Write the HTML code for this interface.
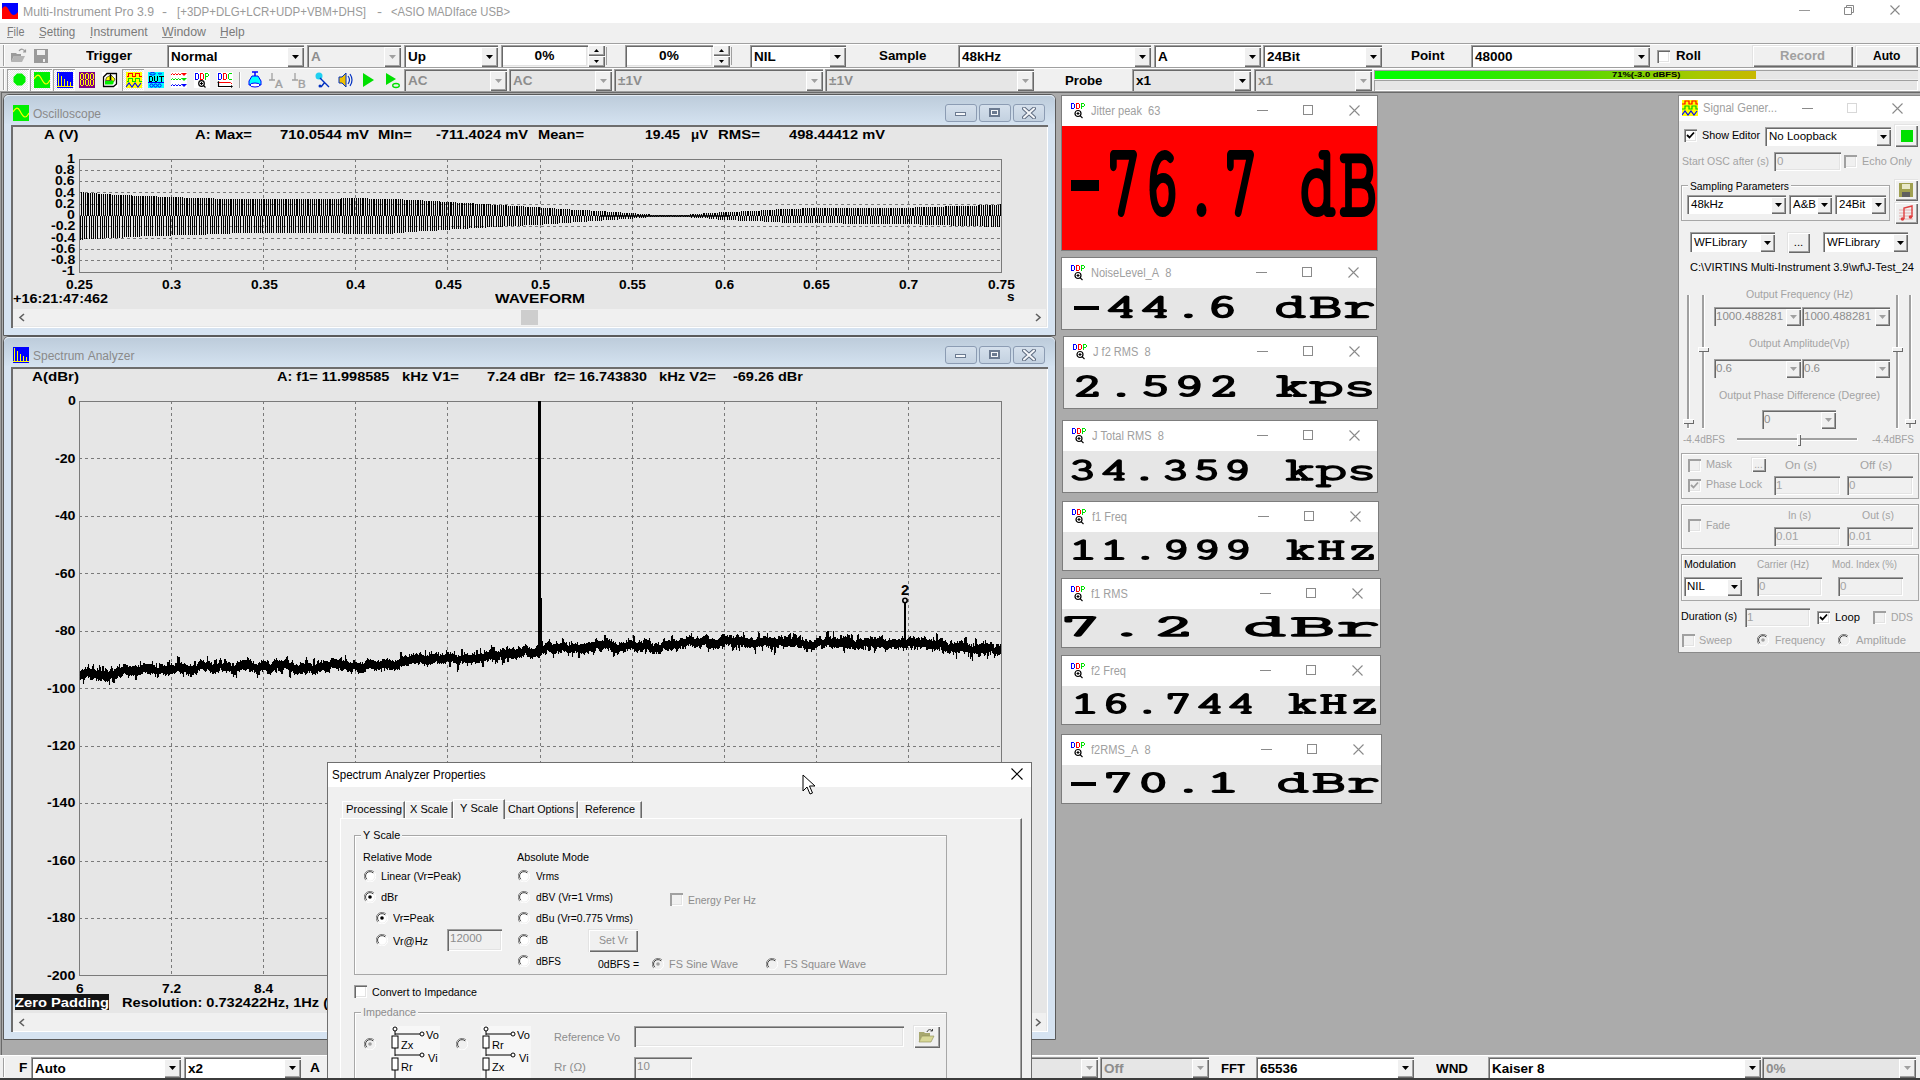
<!DOCTYPE html><html><head><meta charset="utf-8"><style>
html,body{margin:0;padding:0;width:1920px;height:1080px;overflow:hidden;background:#ababab;}
body{position:relative;font-family:"Liberation Sans", sans-serif;}
div,svg{position:absolute;box-sizing:border-box;}
.t{white-space:nowrap;}
</style></head><body>
<div style="left:0px;top:0px;width:1920px;height:23px;background:#fff;"></div>
<svg style="left:2px;top:3px" width="16" height="16"><rect width="16" height="16" fill="#00f"/><path d="M0 16 L0 6 C3 1 5 3 8 9 C10 13 13 13 16 9 L16 16 Z" fill="#f00"/></svg>
<div class="t" style="left:23.00px;top:6.34px;font-size:12px;line-height:12px;font-weight:400;color:#9a9a9a;font-family:'Liberation Sans', sans-serif;transform:scaleX(1.0231);transform-origin:0 0;">Multi-Instrument&nbsp;Pro&nbsp;3.9</div>
<div class="t" style="left:162.00px;top:6.34px;font-size:12px;line-height:12px;font-weight:400;color:#9a9a9a;font-family:'Liberation Sans', sans-serif;transform:scaleX(1.2510);transform-origin:0 0;">-</div>
<div class="t" style="left:177.00px;top:6.34px;font-size:12px;line-height:12px;font-weight:400;color:#9a9a9a;font-family:'Liberation Sans', sans-serif;transform:scaleX(0.9574);transform-origin:0 0;">[+3DP+DLG+LCR+UDP+VBM+DHS]</div>
<div class="t" style="left:377.00px;top:6.34px;font-size:12px;line-height:12px;font-weight:400;color:#9a9a9a;font-family:'Liberation Sans', sans-serif;transform:scaleX(1.2510);transform-origin:0 0;">-</div>
<div class="t" style="left:391.00px;top:6.34px;font-size:12px;line-height:12px;font-weight:400;color:#9a9a9a;font-family:'Liberation Sans', sans-serif;transform:scaleX(0.9391);transform-origin:0 0;">&lt;ASIO&nbsp;MADIface&nbsp;USB&gt;</div>
<div style="left:1799px;top:10px;width:11px;height:1px;background:#999;"></div>
<svg style="left:1844px;top:5px" width="11" height="11"><path d="M2.5 2.5 V0.5 H9.5 V7.5 H7.5 M0.5 2.5 H7.5 V9.5 H0.5 Z" fill="none" stroke="#888" stroke-width="1"/></svg>
<svg style="left:1890px;top:5px" width="10" height="10"><path d="M0.5 0.5 L9.5 9.5 M9.5 0.5 L0.5 9.5" stroke="#888" stroke-width="1.1"/></svg>
<div style="left:0px;top:23px;width:1920px;height:20px;background:#f0f0f0;"></div>
<div class="t" style="left:7.00px;top:25.84px;font-size:12px;line-height:12px;font-weight:400;color:#7a7a7a;font-family:'Liberation Sans', sans-serif;transform:scaleX(0.9000);transform-origin:0 0;">File</div>
<div style="left:7px;top:37px;width:6px;height:1px;background:#8a8a8a;"></div>
<div class="t" style="left:39.00px;top:25.84px;font-size:12px;line-height:12px;font-weight:400;color:#7a7a7a;font-family:'Liberation Sans', sans-serif;transform:scaleX(0.9690);transform-origin:0 0;">Setting</div>
<div style="left:39px;top:37px;width:6px;height:1px;background:#8a8a8a;"></div>
<div class="t" style="left:90.00px;top:25.84px;font-size:12px;line-height:12px;font-weight:400;color:#7a7a7a;font-family:'Liberation Sans', sans-serif;transform:scaleX(1.0178);transform-origin:0 0;">Instrument</div>
<div style="left:90px;top:37px;width:2px;height:1px;background:#8a8a8a;"></div>
<div class="t" style="left:162.00px;top:25.84px;font-size:12px;line-height:12px;font-weight:400;color:#7a7a7a;font-family:'Liberation Sans', sans-serif;transform:scaleX(1.0310);transform-origin:0 0;">Window</div>
<div style="left:162px;top:37px;width:11px;height:1px;background:#8a8a8a;"></div>
<div class="t" style="left:220.00px;top:25.84px;font-size:12px;line-height:12px;font-weight:400;color:#7a7a7a;font-family:'Liberation Sans', sans-serif;transform:scaleX(0.9968);transform-origin:0 0;">Help</div>
<div style="left:220px;top:37px;width:7px;height:1px;background:#8a8a8a;"></div>
<div style="left:0px;top:43px;width:1920px;height:1px;background:#a0a0a0;"></div>
<div style="left:0px;top:44px;width:1920px;height:48px;background:#f0f0f0;"></div>
<div style="left:0px;top:67px;width:1920px;height:1px;background:#a0a0a0;"></div>
<div style="left:0px;top:91px;width:1920px;height:1px;background:#a0a0a0;"></div>
<div style="left:0px;top:92px;width:1920px;height:963px;background:#ababab;"></div>
<div style="left:0px;top:92px;width:1920px;height:1px;background:#696969;"></div>
<div style="left:0px;top:92px;width:1px;height:963px;background:#a0a0a0;"></div>
<div style="left:1px;top:92px;width:1px;height:963px;background:#696969;"></div>
<div style="left:0px;top:1055px;width:1920px;height:25px;background:#f0f0f0;"></div>
<div style="left:0px;top:1078px;width:1920px;height:2px;background:#3c3c3c;"></div>
<div style="left:3px;top:94px;width:1053px;height:242px;background:#d6e3f1;border:1px solid #5a5a5a;border-radius:6px 6px 0 0;"></div>
<div style="left:4px;top:95px;width:1051px;height:29px;background:linear-gradient(#bccbda,#d4e2f0);border-radius:5px 5px 0 0;box-shadow:inset 0 1px 0 #e6edf5;"></div>
<svg style="left:13px;top:105px" width="16" height="16"><rect width="16" height="16" fill="#00f000"/><path d="M0 7 C3 2 5 2 7 6 S10 12 12 12 S15 10 16 8" fill="none" stroke="#ff0" stroke-width="1.2"/></svg>
<div class="t" style="left:33.00px;top:107.84px;font-size:12px;line-height:12px;font-weight:400;color:#8a8a8a;font-family:'Liberation Sans', sans-serif;">Oscilloscope</div>
<div style="left:945px;top:104px;width:32px;height:18px;border:1px solid #8c9cb3;border-radius:3px;background:linear-gradient(#d5e0ec,#c3d1e0);"></div>
<div style="left:979px;top:104px;width:32px;height:18px;border:1px solid #8c9cb3;border-radius:3px;background:linear-gradient(#d5e0ec,#c3d1e0);"></div>
<div style="left:1013px;top:104px;width:32px;height:18px;border:1px solid #8c9cb3;border-radius:3px;background:linear-gradient(#d5e0ec,#c3d1e0);"></div>
<div style="left:955px;top:112px;width:11px;height:4px;border:1px solid #6b7a90;background:#f4f6f9;"></div>
<div style="left:989px;top:108px;width:11px;height:9px;border:2px solid #6b7a90;background:#f4f6f9;"></div>
<div style="left:992px;top:111px;width:5px;height:3px;background:#6b7a90;"></div>
<svg style="left:1022px;top:107px" width="14" height="12"><path d="M2 1.5 L12 10.5 M12 1.5 L2 10.5" stroke="#5e6b80" stroke-width="4" stroke-linecap="round"/><path d="M2 1.5 L12 10.5 M12 1.5 L2 10.5" stroke="#f4f6f9" stroke-width="2" stroke-linecap="round"/></svg>
<div style="left:11px;top:125px;width:1037px;height:203px;background:#e6e6e6;box-shadow:inset 2px 2px 0 #6d6d6d, inset -1px -1px 0 #fff;"></div>
<div style="left:3px;top:336px;width:1053px;height:704px;background:#d6e3f1;border:1px solid #5a5a5a;border-radius:6px 6px 0 0;"></div>
<div style="left:4px;top:337px;width:1051px;height:29px;background:linear-gradient(#bccbda,#d4e2f0);border-radius:5px 5px 0 0;box-shadow:inset 0 1px 0 #e6edf5;"></div>
<svg style="left:13px;top:347px" width="16" height="16"><rect width="16" height="16" fill="#0000ff"/><path d="M1.5 1V15 M4.5 4V15 M7.5 7V15 M10.5 9V15 M13.5 10V15 M0 14.5H16" stroke="#ff0" stroke-width="1"/></svg>
<div class="t" style="left:33.00px;top:349.84px;font-size:12px;line-height:12px;font-weight:400;color:#8a8a8a;font-family:'Liberation Sans', sans-serif;">Spectrum&nbsp;Analyzer</div>
<div style="left:945px;top:346px;width:32px;height:18px;border:1px solid #8c9cb3;border-radius:3px;background:linear-gradient(#d5e0ec,#c3d1e0);"></div>
<div style="left:979px;top:346px;width:32px;height:18px;border:1px solid #8c9cb3;border-radius:3px;background:linear-gradient(#d5e0ec,#c3d1e0);"></div>
<div style="left:1013px;top:346px;width:32px;height:18px;border:1px solid #8c9cb3;border-radius:3px;background:linear-gradient(#d5e0ec,#c3d1e0);"></div>
<div style="left:955px;top:354px;width:11px;height:4px;border:1px solid #6b7a90;background:#f4f6f9;"></div>
<div style="left:989px;top:350px;width:11px;height:9px;border:2px solid #6b7a90;background:#f4f6f9;"></div>
<div style="left:992px;top:353px;width:5px;height:3px;background:#6b7a90;"></div>
<svg style="left:1022px;top:349px" width="14" height="12"><path d="M2 1.5 L12 10.5 M12 1.5 L2 10.5" stroke="#5e6b80" stroke-width="4" stroke-linecap="round"/><path d="M2 1.5 L12 10.5 M12 1.5 L2 10.5" stroke="#f4f6f9" stroke-width="2" stroke-linecap="round"/></svg>
<div style="left:11px;top:367px;width:1037px;height:665px;background:#e6e6e6;box-shadow:inset 2px 2px 0 #6d6d6d, inset -1px -1px 0 #fff;"></div>
<svg style="left:0;top:0" width="1920" height="1080"><path d="M171.5 159 V272" stroke="#7a7a7a" stroke-width="1" stroke-dasharray="3 3"/><path d="M263.5 159 V272" stroke="#7a7a7a" stroke-width="1" stroke-dasharray="3 3"/><path d="M355.5 159 V272" stroke="#7a7a7a" stroke-width="1" stroke-dasharray="3 3"/><path d="M447.5 159 V272" stroke="#7a7a7a" stroke-width="1" stroke-dasharray="3 3"/><path d="M540.5 159 V272" stroke="#7a7a7a" stroke-width="1" stroke-dasharray="3 3"/><path d="M632.5 159 V272" stroke="#7a7a7a" stroke-width="1" stroke-dasharray="3 3"/><path d="M724.5 159 V272" stroke="#7a7a7a" stroke-width="1" stroke-dasharray="3 3"/><path d="M816.5 159 V272" stroke="#7a7a7a" stroke-width="1" stroke-dasharray="3 3"/><path d="M908.5 159 V272" stroke="#7a7a7a" stroke-width="1" stroke-dasharray="3 3"/><path d="M79 170.5 H1001" stroke="#7a7a7a" stroke-width="1" stroke-dasharray="3 3"/><path d="M79 181.5 H1001" stroke="#7a7a7a" stroke-width="1" stroke-dasharray="3 3"/><path d="M79 192.5 H1001" stroke="#7a7a7a" stroke-width="1" stroke-dasharray="3 3"/><path d="M79 204.5 H1001" stroke="#7a7a7a" stroke-width="1" stroke-dasharray="3 3"/><path d="M79 215.5 H1001" stroke="#7a7a7a" stroke-width="1" stroke-dasharray="3 3"/><path d="M79 226.5 H1001" stroke="#7a7a7a" stroke-width="1" stroke-dasharray="3 3"/><path d="M79 238.5 H1001" stroke="#7a7a7a" stroke-width="1" stroke-dasharray="3 3"/><path d="M79 249.5 H1001" stroke="#7a7a7a" stroke-width="1" stroke-dasharray="3 3"/><path d="M79 260.5 H1001" stroke="#7a7a7a" stroke-width="1" stroke-dasharray="3 3"/><rect x="79.5" y="159.5" width="922" height="113" fill="none" stroke="#7a7a7a" stroke-width="1"/><path d="M80.5 216V240M81.5 192V216M82.5 216V240M83.5 192V216M84.5 216V239M85.5 193V216M86.5 216V239M87.5 193V216M88.5 193V216M89.5 216V239M90.5 193V216M91.5 216V239M92.5 193V216M93.5 216V239M94.5 193V216M95.5 216V239M96.5 193V216M97.5 216V239M98.5 194V216M99.5 194V216M100.5 216V239M101.5 194V216M102.5 216V239M103.5 194V216M104.5 216V238M105.5 194V216M106.5 216V238M107.5 194V216M108.5 216V238M109.5 194V216M110.5 194V216M111.5 216V238M112.5 195V216M113.5 216V238M114.5 195V216M115.5 216V238M116.5 195V216M117.5 216V238M118.5 195V216M119.5 216V238M120.5 195V216M121.5 195V216M122.5 216V238M123.5 195V216M124.5 216V237M125.5 195V216M126.5 216V237M127.5 195V216M128.5 216V237M129.5 195V216M130.5 216V237M131.5 195V216M132.5 196V216M133.5 216V237M134.5 196V216M135.5 216V237M136.5 196V216M137.5 216V237M138.5 196V216M139.5 216V237M140.5 196V216M141.5 216V236M142.5 196V216M143.5 196V216M144.5 216V236M145.5 196V216M146.5 216V236M147.5 196V216M148.5 216V236M149.5 196V216M150.5 216V236M151.5 196V216M152.5 216V236M153.5 196V216M154.5 196V216M155.5 216V236M156.5 196V216M157.5 216V236M158.5 197V216M159.5 216V236M160.5 197V216M161.5 216V236M162.5 197V216M163.5 216V236M164.5 197V216M165.5 197V216M166.5 216V236M167.5 197V216M168.5 216V236M169.5 197V216M170.5 216V236M171.5 197V216M172.5 216V235M173.5 197V216M174.5 216V235M175.5 197V216M176.5 197V216M177.5 216V235M178.5 197V216M179.5 216V235M180.5 197V216M181.5 216V235M182.5 197V216M183.5 216V235M184.5 198V216M185.5 216V235M186.5 198V216M187.5 198V216M188.5 216V235M189.5 198V216M190.5 216V235M191.5 198V216M192.5 216V235M193.5 198V216M194.5 216V235M195.5 198V216M196.5 216V235M197.5 198V216M198.5 198V216M199.5 216V235M200.5 198V216M201.5 216V235M202.5 198V216M203.5 216V235M204.5 198V216M205.5 216V235M206.5 198V216M207.5 216V234M208.5 198V216M209.5 198V216M210.5 216V234M211.5 198V216M212.5 216V234M213.5 198V216M214.5 216V234M215.5 199V216M216.5 216V234M217.5 199V216M218.5 216V234M219.5 199V216M220.5 199V216M221.5 216V234M222.5 199V216M223.5 216V234M224.5 199V216M225.5 216V234M226.5 199V216M227.5 216V234M228.5 199V216M229.5 216V234M230.5 199V216M231.5 199V216M232.5 216V233M233.5 199V216M234.5 216V233M235.5 199V216M236.5 216V233M237.5 199V216M238.5 216V233M239.5 199V216M240.5 216V233M241.5 199V216M242.5 199V216M243.5 216V233M244.5 199V216M245.5 216V233M246.5 199V216M247.5 216V233M248.5 199V216M249.5 216V233M250.5 199V216M251.5 216V233M252.5 199V216M253.5 199V216M254.5 216V233M255.5 199V216M256.5 216V233M257.5 199V216M258.5 216V233M259.5 199V216M260.5 216V233M261.5 199V216M262.5 216V233M263.5 199V216M264.5 199V216M265.5 216V233M266.5 199V216M267.5 216V233M268.5 199V216M269.5 216V233M270.5 199V216M271.5 216V233M272.5 199V216M273.5 216V233M274.5 199V216M275.5 199V216M276.5 216V233M277.5 199V216M278.5 216V233M279.5 199V216M280.5 216V233M281.5 199V216M282.5 216V233M283.5 199V216M284.5 216V233M285.5 199V216M286.5 199V216M287.5 216V233M288.5 199V216M289.5 216V233M290.5 199V216M291.5 216V233M292.5 199V216M293.5 216V233M294.5 199V216M295.5 216V233M296.5 199V216M297.5 199V216M298.5 216V233M299.5 199V216M300.5 216V233M301.5 199V216M302.5 216V233M303.5 199V216M304.5 216V233M305.5 199V216M306.5 216V233M307.5 199V216M308.5 199V216M309.5 216V233M310.5 199V216M311.5 216V233M312.5 199V216M313.5 216V233M314.5 199V216M315.5 216V233M316.5 199V216M317.5 216V233M318.5 199V216M319.5 199V216M320.5 216V233M321.5 199V216M322.5 216V233M323.5 199V216M324.5 216V233M325.5 199V216M326.5 216V233M327.5 199V216M328.5 216V233M329.5 199V216M330.5 199V216M331.5 216V233M332.5 199V216M333.5 216V233M334.5 199V216M335.5 216V233M336.5 199V216M337.5 216V233M338.5 199V216M339.5 216V233M340.5 199V216M341.5 198V216M342.5 216V233M343.5 198V216M344.5 216V234M345.5 198V216M346.5 216V234M347.5 198V216M348.5 216V234M349.5 198V216M350.5 216V234M351.5 198V216M352.5 198V216M353.5 216V234M354.5 198V216M355.5 216V234M356.5 198V216M357.5 216V234M358.5 198V216M359.5 216V234M360.5 198V216M361.5 216V234M362.5 198V216M363.5 198V216M364.5 216V234M365.5 198V216M366.5 216V234M367.5 198V216M368.5 216V234M369.5 199V216M370.5 216V234M371.5 199V216M372.5 216V234M373.5 199V216M374.5 199V216M375.5 216V234M376.5 199V216M377.5 216V234M378.5 199V216M379.5 216V234M380.5 199V216M381.5 216V234M382.5 199V216M383.5 216V234M384.5 199V216M385.5 199V216M386.5 216V234M387.5 199V216M388.5 216V234M389.5 199V216M390.5 216V234M391.5 199V216M392.5 216V234M393.5 199V216M394.5 216V233M395.5 199V216M396.5 199V216M397.5 216V233M398.5 199V216M399.5 216V233M400.5 199V216M401.5 216V233M402.5 199V216M403.5 216V233M404.5 200V216M405.5 216V232M406.5 200V216M407.5 200V216M408.5 216V232M409.5 200V216M410.5 216V232M411.5 200V216M412.5 216V232M413.5 200V216M414.5 216V232M415.5 200V216M416.5 216V232M417.5 200V216M418.5 200V216M419.5 216V231M420.5 200V216M421.5 216V231M422.5 200V216M423.5 216V231M424.5 201V216M425.5 216V231M426.5 201V216M427.5 216V231M428.5 201V216M429.5 201V216M430.5 216V231M431.5 201V216M432.5 216V231M433.5 201V216M434.5 216V231M435.5 201V216M436.5 216V231M437.5 201V216M438.5 216V230M439.5 201V216M440.5 202V216M441.5 216V230M442.5 202V216M443.5 216V230M444.5 202V216M445.5 216V230M446.5 202V216M447.5 216V230M448.5 202V216M449.5 216V230M450.5 202V216M451.5 202V216M452.5 216V229M453.5 202V216M454.5 216V229M455.5 202V216M456.5 216V229M457.5 203V216M458.5 216V229M459.5 203V216M460.5 216V229M461.5 203V216M462.5 203V216M463.5 216V229M464.5 203V216M465.5 216V229M466.5 203V216M467.5 216V229M468.5 203V216M469.5 216V228M470.5 203V216M471.5 216V228M472.5 203V216M473.5 203V216M474.5 216V228M475.5 204V216M476.5 216V228M477.5 204V216M478.5 216V228M479.5 204V216M480.5 216V228M481.5 204V216M482.5 216V228M483.5 204V216M484.5 204V216M485.5 216V228M486.5 204V216M487.5 216V227M488.5 204V216M489.5 216V227M490.5 204V216M491.5 216V227M492.5 205V216M493.5 216V227M494.5 205V216M495.5 205V216M496.5 216V227M497.5 205V216M498.5 216V227M499.5 205V216M500.5 216V227M501.5 205V216M502.5 216V227M503.5 205V216M504.5 216V226M505.5 205V216M506.5 205V216M507.5 216V226M508.5 206V216M509.5 216V226M510.5 206V216M511.5 216V226M512.5 206V216M513.5 216V226M514.5 206V216M515.5 216V226M516.5 206V216M517.5 206V216M518.5 216V226M519.5 206V216M520.5 216V226M521.5 206V216M522.5 216V226M523.5 206V216M524.5 216V225M525.5 207V216M526.5 216V225M527.5 207V216M528.5 207V216M529.5 216V225M530.5 207V216M531.5 216V225M532.5 207V216M533.5 216V225M534.5 207V216M535.5 216V225M536.5 207V216M537.5 216V225M538.5 207V216M539.5 207V216M540.5 216V225M541.5 208V216M542.5 216V225M543.5 208V216M544.5 216V224M545.5 208V216M546.5 216V224M547.5 208V216M548.5 216V224M549.5 208V216M550.5 208V216M551.5 216V224M552.5 208V216M553.5 216V224M554.5 208V216M555.5 216V224M556.5 209V216M557.5 216V224M558.5 209V216M559.5 216V223M560.5 209V216M561.5 209V216M562.5 216V223M563.5 209V216M564.5 216V223M565.5 209V216M566.5 216V223M567.5 209V216M568.5 216V223M569.5 209V216M570.5 216V223M571.5 210V216M572.5 210V216M573.5 216V222M574.5 210V216M575.5 216V222M576.5 210V216M577.5 216V222M578.5 210V216M579.5 216V222M580.5 210V216M581.5 216V222M582.5 210V216M583.5 210V216M584.5 216V222M585.5 210V216M586.5 216V222M587.5 210V216M588.5 216V221M589.5 210V216M590.5 216V221M591.5 211V216M592.5 216V221M593.5 211V216M594.5 211V216M595.5 216V221M596.5 211V216M597.5 216V221M598.5 211V216M599.5 216V221M600.5 211V216M601.5 216V221M602.5 211V216M603.5 216V220M604.5 211V216M605.5 211V216M606.5 216V220M607.5 212V216M608.5 216V220M609.5 212V216M610.5 216V220M611.5 212V216M612.5 216V220M613.5 212V216M614.5 216V220M615.5 212V216M616.5 212V216M617.5 216V220M618.5 212V216M619.5 216V219M620.5 212V216M621.5 216V219M622.5 213V216M623.5 216V219M624.5 213V216M625.5 216V219M626.5 213V216M627.5 213V216M628.5 216V219M629.5 213V216M630.5 216V219M631.5 213V216M632.5 216V219M633.5 213V216M634.5 216V218M635.5 213V216M636.5 216V218M637.5 214V216M638.5 214V216M639.5 216V218M640.5 214V216M641.5 216V218M642.5 214V216M643.5 216V218M644.5 214V216M645.5 216V218M646.5 214V216M647.5 216V217M648.5 214V216M649.5 214V216M650.5 216V217M651.5 215V216M652.5 216V217M653.5 215V216M654.5 216V217M655.5 215V216M656.5 216V217M657.5 215V216M658.5 216V217M659.5 215V216M660.5 215V216M661.5 216V217M662.5 215V216M663.5 216V217M664.5 215V216M665.5 216V217M666.5 215V216M667.5 216V217M668.5 215V216M669.5 216V217M670.5 215V216M671.5 215V216M672.5 216V217M673.5 215V216M674.5 216V217M675.5 215V216M676.5 216V217M677.5 215V216M678.5 216V217M679.5 215V216M680.5 216V217M681.5 215V216M682.5 215V216M683.5 216V217M684.5 215V216M685.5 216V217M686.5 215V216M687.5 216V217M688.5 215V216M689.5 216V217M690.5 214V216M691.5 216V218M692.5 214V216M693.5 214V216M694.5 216V218M695.5 214V216M696.5 216V218M697.5 214V216M698.5 216V218M699.5 214V216M700.5 216V218M701.5 214V216M702.5 216V218M703.5 213V216M704.5 213V216M705.5 216V218M706.5 213V216M707.5 216V218M708.5 213V216M709.5 216V219M710.5 213V216M711.5 216V219M712.5 213V216M713.5 216V219M714.5 213V216M715.5 213V216M716.5 216V219M717.5 213V216M718.5 216V220M719.5 212V216M720.5 216V220M721.5 212V216M722.5 216V220M723.5 212V216M724.5 216V220M725.5 212V216M726.5 212V216M727.5 216V220M728.5 212V216M729.5 216V220M730.5 212V216M731.5 216V220M732.5 212V216M733.5 216V220M734.5 212V216M735.5 216V220M736.5 212V216M737.5 212V216M738.5 216V221M739.5 212V216M740.5 216V221M741.5 211V216M742.5 216V221M743.5 211V216M744.5 216V221M745.5 211V216M746.5 216V221M747.5 211V216M748.5 211V216M749.5 216V221M750.5 211V216M751.5 216V221M752.5 211V216M753.5 216V221M754.5 211V216M755.5 216V221M756.5 211V216M757.5 216V221M758.5 211V216M759.5 211V216M760.5 216V221M761.5 210V216M762.5 216V221M763.5 210V216M764.5 216V222M765.5 210V216M766.5 216V222M767.5 210V216M768.5 216V222M769.5 210V216M770.5 210V216M771.5 216V222M772.5 210V216M773.5 216V222M774.5 210V216M775.5 216V222M776.5 209V216M777.5 216V222M778.5 209V216M779.5 216V222M780.5 209V216M781.5 209V216M782.5 216V223M783.5 209V216M784.5 216V223M785.5 209V216M786.5 216V223M787.5 209V216M788.5 216V223M789.5 209V216M790.5 216V223M791.5 209V216M792.5 209V216M793.5 216V223M794.5 209V216M795.5 216V223M796.5 209V216M797.5 216V223M798.5 209V216M799.5 216V223M800.5 209V216M801.5 216V223M802.5 208V216M803.5 208V216M804.5 216V223M805.5 208V216M806.5 216V223M807.5 208V216M808.5 216V223M809.5 208V216M810.5 216V223M811.5 208V216M812.5 216V223M813.5 208V216M814.5 208V216M815.5 216V223M816.5 208V216M817.5 216V223M818.5 208V216M819.5 216V223M820.5 208V216M821.5 216V223M822.5 208V216M823.5 216V223M824.5 208V216M825.5 208V216M826.5 216V223M827.5 208V216M828.5 216V223M829.5 208V216M830.5 216V223M831.5 208V216M832.5 216V223M833.5 208V216M834.5 216V223M835.5 208V216M836.5 208V216M837.5 216V223M838.5 208V216M839.5 216V223M840.5 208V216M841.5 216V223M842.5 208V216M843.5 216V224M844.5 208V216M845.5 216V224M846.5 208V216M847.5 208V216M848.5 216V224M849.5 208V216M850.5 216V224M851.5 208V216M852.5 216V224M853.5 208V216M854.5 216V224M855.5 208V216M856.5 216V224M857.5 208V216M858.5 208V216M859.5 216V224M860.5 208V216M861.5 216V224M862.5 208V216M863.5 216V224M864.5 208V216M865.5 216V224M866.5 208V216M867.5 216V224M868.5 208V216M869.5 208V216M870.5 216V224M871.5 208V216M872.5 216V224M873.5 208V216M874.5 216V224M875.5 208V216M876.5 216V224M877.5 208V216M878.5 216V224M879.5 208V216M880.5 208V216M881.5 216V224M882.5 208V216M883.5 216V224M884.5 208V216M885.5 216V224M886.5 208V216M887.5 216V224M888.5 208V216M889.5 216V224M890.5 208V216M891.5 208V216M892.5 216V224M893.5 208V216M894.5 216V224M895.5 208V216M896.5 216V224M897.5 208V216M898.5 216V224M899.5 208V216M900.5 216V224M901.5 208V216M902.5 208V216M903.5 216V224M904.5 208V216M905.5 216V224M906.5 208V216M907.5 216V224M908.5 208V216M909.5 216V224M910.5 208V216M911.5 216V224M912.5 208V216M913.5 208V216M914.5 216V224M915.5 207V216M916.5 216V224M917.5 207V216M918.5 216V224M919.5 207V216M920.5 216V225M921.5 207V216M922.5 216V225M923.5 207V216M924.5 207V216M925.5 216V225M926.5 207V216M927.5 216V225M928.5 207V216M929.5 216V225M930.5 207V216M931.5 216V225M932.5 207V216M933.5 216V225M934.5 207V216M935.5 207V216M936.5 216V225M937.5 207V216M938.5 216V225M939.5 207V216M940.5 216V225M941.5 207V216M942.5 216V225M943.5 207V216M944.5 216V225M945.5 206V216M946.5 206V216M947.5 216V225M948.5 206V216M949.5 216V225M950.5 206V216M951.5 216V226M952.5 206V216M953.5 216V226M954.5 206V216M955.5 216V226M956.5 206V216M957.5 206V216M958.5 216V226M959.5 206V216M960.5 216V226M961.5 206V216M962.5 216V226M963.5 206V216M964.5 216V226M965.5 206V216M966.5 216V226M967.5 206V216M968.5 206V216M969.5 216V226M970.5 206V216M971.5 216V226M972.5 206V216M973.5 216V226M974.5 206V216M975.5 216V226M976.5 206V216M977.5 216V226M978.5 205V216M979.5 205V216M980.5 216V226M981.5 205V216M982.5 216V226M983.5 205V216M984.5 216V227M985.5 205V216M986.5 216V227M987.5 205V216M988.5 216V227M989.5 205V216M990.5 205V216M991.5 216V227M992.5 205V216M993.5 216V227M994.5 205V216M995.5 216V227M996.5 205V216M997.5 216V227M998.5 205V216M999.5 216V227M1000.5 204V216" stroke="#000" stroke-width="1"/><path d="M600 216H730" stroke="#000" stroke-width="1.5"/></svg>
<div class="t" style="left:67.17px;top:152.96px;font-size:12.8px;line-height:12.8px;font-weight:700;color:#000;font-family:'Liberation Sans', sans-serif;transform:scaleX(1.1000);transform-origin:0 0;">1</div>
<div class="t" style="left:55.43px;top:164.21px;font-size:12.8px;line-height:12.8px;font-weight:700;color:#000;font-family:'Liberation Sans', sans-serif;transform:scaleX(1.1000);transform-origin:0 0;">0.8</div>
<div class="t" style="left:55.43px;top:175.46px;font-size:12.8px;line-height:12.8px;font-weight:700;color:#000;font-family:'Liberation Sans', sans-serif;transform:scaleX(1.1000);transform-origin:0 0;">0.6</div>
<div class="t" style="left:55.43px;top:186.71px;font-size:12.8px;line-height:12.8px;font-weight:700;color:#000;font-family:'Liberation Sans', sans-serif;transform:scaleX(1.1000);transform-origin:0 0;">0.4</div>
<div class="t" style="left:55.43px;top:197.96px;font-size:12.8px;line-height:12.8px;font-weight:700;color:#000;font-family:'Liberation Sans', sans-serif;transform:scaleX(1.1000);transform-origin:0 0;">0.2</div>
<div class="t" style="left:67.17px;top:209.21px;font-size:12.8px;line-height:12.8px;font-weight:700;color:#000;font-family:'Liberation Sans', sans-serif;transform:scaleX(1.1000);transform-origin:0 0;">0</div>
<div class="t" style="left:50.74px;top:220.46px;font-size:12.8px;line-height:12.8px;font-weight:700;color:#000;font-family:'Liberation Sans', sans-serif;transform:scaleX(1.1000);transform-origin:0 0;">-0.2</div>
<div class="t" style="left:50.74px;top:231.71px;font-size:12.8px;line-height:12.8px;font-weight:700;color:#000;font-family:'Liberation Sans', sans-serif;transform:scaleX(1.1000);transform-origin:0 0;">-0.4</div>
<div class="t" style="left:50.74px;top:242.96px;font-size:12.8px;line-height:12.8px;font-weight:700;color:#000;font-family:'Liberation Sans', sans-serif;transform:scaleX(1.1000);transform-origin:0 0;">-0.6</div>
<div class="t" style="left:50.74px;top:254.21px;font-size:12.8px;line-height:12.8px;font-weight:700;color:#000;font-family:'Liberation Sans', sans-serif;transform:scaleX(1.1000);transform-origin:0 0;">-0.8</div>
<div class="t" style="left:62.48px;top:265.46px;font-size:12.8px;line-height:12.8px;font-weight:700;color:#000;font-family:'Liberation Sans', sans-serif;transform:scaleX(1.1000);transform-origin:0 0;">-1</div>
<div class="t" style="left:66.20px;top:277.57px;font-size:13.5px;line-height:13.5px;font-weight:700;color:#000;font-family:'Liberation Sans', sans-serif;transform:scaleX(1.0200);transform-origin:0 0;">0.25</div>
<div class="t" style="left:162.18px;top:277.57px;font-size:13.5px;line-height:13.5px;font-weight:700;color:#000;font-family:'Liberation Sans', sans-serif;transform:scaleX(1.0200);transform-origin:0 0;">0.3</div>
<div class="t" style="left:250.50px;top:277.57px;font-size:13.5px;line-height:13.5px;font-weight:700;color:#000;font-family:'Liberation Sans', sans-serif;transform:scaleX(1.0200);transform-origin:0 0;">0.35</div>
<div class="t" style="left:346.48px;top:277.57px;font-size:13.5px;line-height:13.5px;font-weight:700;color:#000;font-family:'Liberation Sans', sans-serif;transform:scaleX(1.0200);transform-origin:0 0;">0.4</div>
<div class="t" style="left:434.80px;top:277.57px;font-size:13.5px;line-height:13.5px;font-weight:700;color:#000;font-family:'Liberation Sans', sans-serif;transform:scaleX(1.0200);transform-origin:0 0;">0.45</div>
<div class="t" style="left:530.78px;top:277.57px;font-size:13.5px;line-height:13.5px;font-weight:700;color:#000;font-family:'Liberation Sans', sans-serif;transform:scaleX(1.0200);transform-origin:0 0;">0.5</div>
<div class="t" style="left:619.10px;top:277.57px;font-size:13.5px;line-height:13.5px;font-weight:700;color:#000;font-family:'Liberation Sans', sans-serif;transform:scaleX(1.0200);transform-origin:0 0;">0.55</div>
<div class="t" style="left:715.08px;top:277.57px;font-size:13.5px;line-height:13.5px;font-weight:700;color:#000;font-family:'Liberation Sans', sans-serif;transform:scaleX(1.0200);transform-origin:0 0;">0.6</div>
<div class="t" style="left:803.40px;top:277.57px;font-size:13.5px;line-height:13.5px;font-weight:700;color:#000;font-family:'Liberation Sans', sans-serif;transform:scaleX(1.0200);transform-origin:0 0;">0.65</div>
<div class="t" style="left:899.38px;top:277.57px;font-size:13.5px;line-height:13.5px;font-weight:700;color:#000;font-family:'Liberation Sans', sans-serif;transform:scaleX(1.0200);transform-origin:0 0;">0.7</div>
<div class="t" style="left:987.70px;top:277.57px;font-size:13.5px;line-height:13.5px;font-weight:700;color:#000;font-family:'Liberation Sans', sans-serif;transform:scaleX(1.0200);transform-origin:0 0;">0.75</div>
<div class="t" style="left:1007.00px;top:289.57px;font-size:13.5px;line-height:13.5px;font-weight:700;color:#000;font-family:'Liberation Sans', sans-serif;">s</div>
<div class="t" style="left:13.00px;top:291.57px;font-size:13.5px;line-height:13.5px;font-weight:700;color:#000;font-family:'Liberation Sans', sans-serif;transform:scaleX(1.0681);transform-origin:0 0;">+16:21:47:462</div>
<div class="t" style="left:495.00px;top:291.57px;font-size:13.5px;line-height:13.5px;font-weight:700;color:#000;font-family:'Liberation Sans', sans-serif;transform:scaleX(1.1465);transform-origin:0 0;">WAVEFORM</div>
<div class="t" style="left:44.00px;top:128.40px;font-size:13.7px;line-height:13.7px;font-weight:700;color:#000;font-family:'Liberation Sans', sans-serif;transform:scaleX(1.0809);transform-origin:0 0;">A&nbsp;(V)</div>
<div class="t" style="left:195.00px;top:128.40px;font-size:13.7px;line-height:13.7px;font-weight:700;color:#000;font-family:'Liberation Sans', sans-serif;transform:scaleX(1.0773);transform-origin:0 0;">A:&nbsp;Max=</div>
<div class="t" style="left:280.00px;top:128.40px;font-size:13.7px;line-height:13.7px;font-weight:700;color:#000;font-family:'Liberation Sans', sans-serif;transform:scaleX(1.0819);transform-origin:0 0;">710.0544&nbsp;mV</div>
<div class="t" style="left:378.00px;top:128.40px;font-size:13.7px;line-height:13.7px;font-weight:700;color:#000;font-family:'Liberation Sans', sans-serif;transform:scaleX(1.0764);transform-origin:0 0;">MIn=</div>
<div class="t" style="left:436.00px;top:128.40px;font-size:13.7px;line-height:13.7px;font-weight:700;color:#000;font-family:'Liberation Sans', sans-serif;transform:scaleX(1.0689);transform-origin:0 0;">-711.4024&nbsp;mV</div>
<div class="t" style="left:538.00px;top:128.40px;font-size:13.7px;line-height:13.7px;font-weight:700;color:#000;font-family:'Liberation Sans', sans-serif;transform:scaleX(1.0693);transform-origin:0 0;">Mean=</div>
<div class="t" style="left:645.00px;top:128.40px;font-size:13.7px;line-height:13.7px;font-weight:700;color:#000;font-family:'Liberation Sans', sans-serif;transform:scaleX(1.0210);transform-origin:0 0;">19.45</div>
<div class="t" style="left:691.00px;top:128.40px;font-size:13.7px;line-height:13.7px;font-weight:700;color:#000;font-family:'Liberation Sans', sans-serif;transform:scaleX(0.9704);transform-origin:0 0;">μV</div>
<div class="t" style="left:718.00px;top:128.40px;font-size:13.7px;line-height:13.7px;font-weight:700;color:#000;font-family:'Liberation Sans', sans-serif;transform:scaleX(1.0925);transform-origin:0 0;">RMS=</div>
<div class="t" style="left:789.00px;top:128.40px;font-size:13.7px;line-height:13.7px;font-weight:700;color:#000;font-family:'Liberation Sans', sans-serif;transform:scaleX(1.0681);transform-origin:0 0;">498.44412&nbsp;mV</div>
<div style="left:13px;top:309px;width:1033px;height:17px;background:#f0f0f0;"></div>
<svg style="left:18px;top:313px" width="8" height="9"><path d="M6 1 L2 4.5 L6 8" fill="none" stroke="#606060" stroke-width="1.6"/></svg>
<svg style="left:1034px;top:313px" width="8" height="9"><path d="M2 1 L6 4.5 L2 8" fill="none" stroke="#606060" stroke-width="1.6"/></svg>
<div style="left:521px;top:310px;width:17px;height:15px;background:#cdcdcd;"></div>
<svg style="left:0;top:0" width="1920" height="1080"><path d="M171.5 401 V975" stroke="#7a7a7a" stroke-width="1" stroke-dasharray="3 3"/><path d="M263.5 401 V975" stroke="#7a7a7a" stroke-width="1" stroke-dasharray="3 3"/><path d="M355.5 401 V975" stroke="#7a7a7a" stroke-width="1" stroke-dasharray="3 3"/><path d="M447.5 401 V975" stroke="#7a7a7a" stroke-width="1" stroke-dasharray="3 3"/><path d="M540.5 401 V975" stroke="#7a7a7a" stroke-width="1" stroke-dasharray="3 3"/><path d="M632.5 401 V975" stroke="#7a7a7a" stroke-width="1" stroke-dasharray="3 3"/><path d="M724.5 401 V975" stroke="#7a7a7a" stroke-width="1" stroke-dasharray="3 3"/><path d="M816.5 401 V975" stroke="#7a7a7a" stroke-width="1" stroke-dasharray="3 3"/><path d="M908.5 401 V975" stroke="#7a7a7a" stroke-width="1" stroke-dasharray="3 3"/><path d="M79 458.5 H1001" stroke="#7a7a7a" stroke-width="1" stroke-dasharray="3 3"/><path d="M79 516.5 H1001" stroke="#7a7a7a" stroke-width="1" stroke-dasharray="3 3"/><path d="M79 573.5 H1001" stroke="#7a7a7a" stroke-width="1" stroke-dasharray="3 3"/><path d="M79 631.5 H1001" stroke="#7a7a7a" stroke-width="1" stroke-dasharray="3 3"/><path d="M79 688.5 H1001" stroke="#7a7a7a" stroke-width="1" stroke-dasharray="3 3"/><path d="M79 746.5 H1001" stroke="#7a7a7a" stroke-width="1" stroke-dasharray="3 3"/><path d="M79 803.5 H1001" stroke="#7a7a7a" stroke-width="1" stroke-dasharray="3 3"/><path d="M79 861.5 H1001" stroke="#7a7a7a" stroke-width="1" stroke-dasharray="3 3"/><path d="M79 918.5 H1001" stroke="#7a7a7a" stroke-width="1" stroke-dasharray="3 3"/><rect x="79.5" y="401.5" width="922" height="574" fill="none" stroke="#7a7a7a" stroke-width="1"/><path d="M80.5 671V680M81.5 670V679M82.5 669V679M83.5 670V684M84.5 669V680M85.5 667V678M86.5 669V677M87.5 667V676M88.5 664V678M89.5 668V677M90.5 669V680M91.5 669V680M92.5 666V680M93.5 664V679M94.5 669V678M95.5 670V678M96.5 671V681M97.5 668V679M98.5 670V681M99.5 665V680M100.5 667V681M101.5 671V681M102.5 666V679M103.5 666V680M104.5 671V681M105.5 668V682M106.5 669V681M107.5 670V682M108.5 672V681M109.5 671V685M110.5 669V679M111.5 666V678M112.5 668V682M113.5 671V683M114.5 669V683M115.5 669V679M116.5 668V679M117.5 666V678M118.5 667V676M119.5 664V677M120.5 668V678M121.5 667V677M122.5 667V676M123.5 664V674M124.5 664V673M125.5 664V674M126.5 665V675M127.5 665V675M128.5 667V678M129.5 666V676M130.5 666V675M131.5 667V676M132.5 666V675M133.5 666V676M134.5 666V675M135.5 665V680M136.5 666V680M137.5 667V676M138.5 665V675M139.5 667V675M140.5 661V675M141.5 665V674M142.5 665V674M143.5 663V672M144.5 663V672M145.5 664V673M146.5 664V672M147.5 664V674M148.5 664V674M149.5 664V674M150.5 664V675M151.5 664V673M152.5 661V674M153.5 665V673M154.5 665V674M155.5 667V677M156.5 663V674M157.5 668V678M158.5 668V677M159.5 663V674M160.5 664V674M161.5 664V673M162.5 664V673M163.5 666V675M164.5 665V674M165.5 666V676M166.5 666V675M167.5 662V674M168.5 662V676M169.5 660V675M170.5 665V674M171.5 663V674M172.5 665V674M173.5 665V673M174.5 666V674M175.5 663V673M176.5 663V672M177.5 656V671M178.5 657V671M179.5 657V672M180.5 663V674M181.5 662V673M182.5 664V674M183.5 664V677M184.5 663V672M185.5 664V672M186.5 665V675M187.5 665V674M188.5 666V676M189.5 666V674M190.5 664V677M191.5 666V677M192.5 666V675M193.5 665V675M194.5 661V673M195.5 661V674M196.5 666V675M197.5 664V673M198.5 662V670M199.5 661V671M200.5 659V669M201.5 660V669M202.5 661V669M203.5 660V670M204.5 662V671M205.5 663V672M206.5 662V671M207.5 656V669M208.5 661V670M209.5 661V671M210.5 663V673M211.5 662V672M212.5 665V674M213.5 664V674M214.5 660V673M215.5 660V674M216.5 659V672M217.5 664V672M218.5 663V673M219.5 660V671M220.5 658V668M221.5 660V670M222.5 664V672M223.5 663V671M224.5 659V671M225.5 659V671M226.5 661V673M227.5 663V671M228.5 662V671M229.5 662V672M230.5 663V671M231.5 666V674M232.5 663V674M233.5 663V677M234.5 666V675M235.5 665V675M236.5 663V678M237.5 661V671M238.5 662V671M239.5 662V672M240.5 660V670M241.5 661V670M242.5 660V669M243.5 660V670M244.5 660V670M245.5 660V671M246.5 660V670M247.5 657V669M248.5 658V669M249.5 660V672M250.5 659V672M251.5 661V671M252.5 663V672M253.5 661V670M254.5 664V673M255.5 664V672M256.5 664V674M257.5 665V678M258.5 663V675M259.5 662V675M260.5 663V671M261.5 660V670M262.5 661V672M263.5 660V670M264.5 661V670M265.5 661V670M266.5 662V671M267.5 660V674M268.5 661V674M269.5 664V674M270.5 665V675M271.5 664V673M272.5 662V672M273.5 661V671M274.5 659V670M275.5 660V672M276.5 658V673M277.5 660V668M278.5 661V671M279.5 660V671M280.5 661V672M281.5 660V674M282.5 661V674M283.5 661V670M284.5 660V668M285.5 659V668M286.5 657V669M287.5 656V669M288.5 660V670M289.5 663V677M290.5 663V678M291.5 662V672M292.5 660V671M293.5 663V673M294.5 665V675M295.5 665V674M296.5 664V674M297.5 665V675M298.5 666V674M299.5 665V673M300.5 662V674M301.5 663V674M302.5 663V674M303.5 663V672M304.5 664V673M305.5 660V675M306.5 657V674M307.5 660V673M308.5 663V671M309.5 663V673M310.5 663V671M311.5 664V673M312.5 666V675M313.5 659V674M314.5 658V674M315.5 665V675M316.5 664V673M317.5 661V674M318.5 660V671M319.5 663V672M320.5 662V672M321.5 660V671M322.5 663V670M323.5 660V670M324.5 661V671M325.5 661V673M326.5 661V672M327.5 661V672M328.5 662V672M329.5 662V673M330.5 660V669M331.5 658V667M332.5 658V668M333.5 658V668M334.5 659V668M335.5 659V668M336.5 659V669M337.5 660V669M338.5 660V671M339.5 659V668M340.5 658V670M341.5 657V671M342.5 661V671M343.5 660V670M344.5 661V669M345.5 655V669M346.5 659V670M347.5 661V672M348.5 662V672M349.5 663V671M350.5 662V672M351.5 663V674M352.5 663V672M353.5 660V669M354.5 660V669M355.5 662V671M356.5 662V670M357.5 663V672M358.5 663V674M359.5 663V673M360.5 662V673M361.5 664V673M362.5 662V673M363.5 664V673M364.5 663V672M365.5 661V672M366.5 660V669M367.5 658V669M368.5 659V669M369.5 660V668M370.5 659V668M371.5 660V669M372.5 660V669M373.5 660V669M374.5 661V671M375.5 661V670M376.5 662V671M377.5 661V669M378.5 660V670M379.5 662V670M380.5 661V669M381.5 661V672M382.5 659V668M383.5 659V668M384.5 659V671M385.5 660V668M386.5 659V669M387.5 658V670M388.5 660V668M389.5 659V670M390.5 660V670M391.5 661V670M392.5 660V670M393.5 661V669M394.5 662V671M395.5 660V670M396.5 661V669M397.5 660V670M398.5 660V669M399.5 659V670M400.5 652V666M401.5 652V667M402.5 656V666M403.5 657V666M404.5 656V666M405.5 655V665M406.5 656V666M407.5 657V666M408.5 657V666M409.5 654V664M410.5 656V664M411.5 654V664M412.5 655V663M413.5 653V663M414.5 655V664M415.5 654V664M416.5 653V663M417.5 654V663M418.5 655V665M419.5 653V664M420.5 652V662M421.5 654V663M422.5 655V664M423.5 655V664M424.5 656V666M425.5 650V664M426.5 656V665M427.5 655V667M428.5 656V665M429.5 652V664M430.5 654V665M431.5 651V664M432.5 654V664M433.5 654V663M434.5 654V663M435.5 653V662M436.5 652V661M437.5 654V664M438.5 652V663M439.5 656V664M440.5 654V663M441.5 655V664M442.5 653V663M443.5 655V664M444.5 655V663M445.5 654V664M446.5 650V662M447.5 652V661M448.5 652V662M449.5 654V667M450.5 652V667M451.5 654V662M452.5 653V661M453.5 654V663M454.5 651V663M455.5 655V663M456.5 655V664M457.5 657V672M458.5 655V670M459.5 656V665M460.5 656V663M461.5 649V661M462.5 649V664M463.5 655V663M464.5 652V662M465.5 654V663M466.5 654V663M467.5 653V666M468.5 655V663M469.5 655V663M470.5 655V663M471.5 655V665M472.5 653V663M473.5 654V662M474.5 652V662M475.5 655V664M476.5 650V663M477.5 650V663M478.5 654V663M479.5 654V663M480.5 648V661M481.5 653V663M482.5 654V667M483.5 654V667M484.5 650V661M485.5 652V661M486.5 651V660M487.5 652V662M488.5 652V661M489.5 650V659M490.5 649V660M491.5 645V659M492.5 647V662M493.5 647V660M494.5 647V660M495.5 651V664M496.5 651V662M497.5 652V663M498.5 651V660M499.5 652V660M500.5 649V657M501.5 650V660M502.5 648V665M503.5 648V663M504.5 649V663M505.5 650V659M506.5 647V658M507.5 646V662M508.5 649V662M509.5 648V658M510.5 649V658M511.5 649V659M512.5 648V659M513.5 647V659M514.5 649V658M515.5 650V659M516.5 649V660M517.5 649V658M518.5 646V657M519.5 647V658M520.5 648V657M521.5 649V658M522.5 647V656M523.5 646V657M524.5 646V655M525.5 644V653M526.5 645V655M527.5 646V657M528.5 648V657M529.5 647V657M530.5 649V659M531.5 648V658M532.5 649V659M533.5 649V657M534.5 649V657M535.5 648V657M536.5 646V656M537.5 645V657M538.5 645V658M539.5 644V658M540.5 646V656M541.5 643V655M542.5 641V653M543.5 646V654M544.5 645V653M545.5 643V655M546.5 643V654M547.5 642V650M548.5 641V651M549.5 639V652M550.5 642V652M551.5 643V653M552.5 645V654M553.5 644V658M554.5 644V654M555.5 644V654M556.5 641V653M557.5 643V651M558.5 644V654M559.5 644V652M560.5 643V653M561.5 643V653M562.5 638V650M563.5 639V651M564.5 642V652M565.5 643V651M566.5 642V652M567.5 645V653M568.5 646V656M569.5 642V653M570.5 645V653M571.5 641V652M572.5 643V657M573.5 644V653M574.5 644V653M575.5 643V651M576.5 644V653M577.5 642V652M578.5 645V658M579.5 645V658M580.5 644V653M581.5 644V654M582.5 644V653M583.5 644V654M584.5 643V655M585.5 644V653M586.5 643V652M587.5 643V653M588.5 642V654M589.5 642V651M590.5 643V651M591.5 642V652M592.5 642V652M593.5 642V655M594.5 642V653M595.5 639V651M596.5 638V648M597.5 640V648M598.5 641V649M599.5 641V651M600.5 641V652M601.5 641V652M602.5 640V650M603.5 641V649M604.5 635V648M605.5 635V649M606.5 638V648M607.5 638V649M608.5 640V651M609.5 639V648M610.5 641V650M611.5 639V652M612.5 642V652M613.5 641V657M614.5 643V656M615.5 642V653M616.5 644V653M617.5 645V655M618.5 645V654M619.5 642V652M620.5 643V651M621.5 642V651M622.5 643V651M623.5 642V653M624.5 643V652M625.5 643V652M626.5 640V649M627.5 642V651M628.5 638V649M629.5 640V649M630.5 640V650M631.5 640V648M632.5 641V649M633.5 635V649M634.5 636V652M635.5 642V651M636.5 643V652M637.5 643V653M638.5 642V651M639.5 640V650M640.5 642V652M641.5 641V652M642.5 643V652M643.5 640V650M644.5 638V649M645.5 639V654M646.5 639V652M647.5 640V649M648.5 640V650M649.5 638V652M650.5 641V653M651.5 644V652M652.5 643V654M653.5 646V654M654.5 644V654M655.5 643V652M656.5 643V654M657.5 644V652M658.5 642V654M659.5 645V654M660.5 645V654M661.5 643V652M662.5 642V651M663.5 639V648M664.5 638V649M665.5 641V650M666.5 641V650M667.5 641V651M668.5 640V651M669.5 640V649M670.5 641V650M671.5 636V651M672.5 635V650M673.5 639V649M674.5 639V648M675.5 641V649M676.5 640V652M677.5 641V651M678.5 641V649M679.5 640V648M680.5 638V649M681.5 638V646M682.5 638V649M683.5 639V649M684.5 639V647M685.5 639V649M686.5 636V646M687.5 637V645M688.5 637V646M689.5 635V644M690.5 636V646M691.5 633V645M692.5 637V647M693.5 637V646M694.5 639V648M695.5 639V648M696.5 638V647M697.5 636V647M698.5 638V646M699.5 639V648M700.5 638V649M701.5 638V647M702.5 637V645M703.5 636V645M704.5 636V645M705.5 635V644M706.5 634V647M707.5 635V648M708.5 636V652M709.5 639V649M710.5 639V649M711.5 639V648M712.5 638V648M713.5 639V650M714.5 639V648M715.5 640V649M716.5 640V648M717.5 640V649M718.5 639V649M719.5 638V648M720.5 637V646M721.5 635V646M722.5 634V649M723.5 634V647M724.5 634V647M725.5 636V644M726.5 636V645M727.5 635V644M728.5 637V646M729.5 635V645M730.5 635V644M731.5 635V647M732.5 638V651M733.5 636V650M734.5 638V648M735.5 637V647M736.5 635V650M737.5 634V645M738.5 635V648M739.5 637V651M740.5 637V645M741.5 636V647M742.5 637V647M743.5 632V645M744.5 635V647M745.5 638V648M746.5 638V647M747.5 638V648M748.5 639V647M749.5 639V648M750.5 638V648M751.5 637V647M752.5 638V647M753.5 640V648M754.5 640V650M755.5 640V654M756.5 639V647M757.5 637V647M758.5 632V646M759.5 633V647M760.5 638V646M761.5 638V647M762.5 638V651M763.5 636V646M764.5 636V645M765.5 636V645M766.5 637V647M767.5 633V646M768.5 638V648M769.5 637V646M770.5 637V649M771.5 638V652M772.5 638V650M773.5 638V647M774.5 637V655M775.5 638V653M776.5 639V647M777.5 639V648M778.5 636V648M779.5 636V645M780.5 637V645M781.5 635V646M782.5 637V646M783.5 639V649M784.5 636V647M785.5 636V647M786.5 637V647M787.5 637V647M788.5 635V646M789.5 634V646M790.5 633V647M791.5 639V647M792.5 637V647M793.5 633V647M794.5 634V647M795.5 634V646M796.5 635V645M797.5 638V647M798.5 637V648M799.5 636V648M800.5 635V648M801.5 640V648M802.5 637V646M803.5 640V648M804.5 641V650M805.5 639V649M806.5 639V652M807.5 641V652M808.5 642V649M809.5 640V649M810.5 640V649M811.5 641V652M812.5 642V650M813.5 642V650M814.5 640V650M815.5 640V648M816.5 638V648M817.5 638V647M818.5 638V646M819.5 636V646M820.5 636V645M821.5 639V649M822.5 640V649M823.5 640V648M824.5 639V648M825.5 637V646M826.5 632V647M827.5 631V645M828.5 631V645M829.5 637V647M830.5 636V647M831.5 639V648M832.5 638V649M833.5 631V647M834.5 637V648M835.5 637V647M836.5 639V648M837.5 638V648M838.5 639V648M839.5 639V647M840.5 635V647M841.5 635V647M842.5 638V647M843.5 636V651M844.5 637V653M845.5 636V648M846.5 637V648M847.5 634V649M848.5 635V648M849.5 635V649M850.5 638V649M851.5 634V647M852.5 635V649M853.5 640V649M854.5 641V650M855.5 642V650M856.5 640V648M857.5 635V649M858.5 634V650M859.5 639V649M860.5 638V648M861.5 639V649M862.5 640V649M863.5 640V650M864.5 638V646M865.5 638V650M866.5 638V646M867.5 638V647M868.5 638V651M869.5 639V651M870.5 636V650M871.5 637V646M872.5 637V647M873.5 639V648M874.5 637V653M875.5 637V651M876.5 639V649M877.5 638V647M878.5 638V647M879.5 636V648M880.5 637V648M881.5 636V647M882.5 635V647M883.5 639V648M884.5 640V649M885.5 639V652M886.5 641V650M887.5 641V650M888.5 640V649M889.5 638V648M890.5 640V648M891.5 640V649M892.5 639V647M893.5 639V647M894.5 639V649M895.5 639V649M896.5 640V649M897.5 640V648M898.5 639V650M899.5 639V647M900.5 640V648M901.5 638V647M902.5 636V648M903.5 638V651M904.5 638V648M905.5 638V648M906.5 640V650M907.5 639V648M908.5 638V646M909.5 637V646M910.5 636V648M911.5 638V650M912.5 638V648M913.5 636V646M914.5 637V650M915.5 639V649M916.5 638V647M917.5 638V650M918.5 637V647M919.5 638V647M920.5 640V649M921.5 637V648M922.5 638V647M923.5 638V647M924.5 636V647M925.5 637V647M926.5 639V650M927.5 640V650M928.5 640V649M929.5 639V649M930.5 640V649M931.5 639V649M932.5 641V652M933.5 637V649M934.5 640V651M935.5 641V650M936.5 633V649M937.5 634V650M938.5 640V649M939.5 639V651M940.5 638V647M941.5 638V650M942.5 638V653M943.5 641V654M944.5 641V651M945.5 640V652M946.5 642V651M947.5 643V653M948.5 645V653M949.5 644V654M950.5 641V653M951.5 640V651M952.5 643V652M953.5 644V655M954.5 642V652M955.5 643V653M956.5 643V659M957.5 641V652M958.5 643V653M959.5 641V653M960.5 641V651M961.5 640V651M962.5 641V651M963.5 643V652M964.5 638V654M965.5 637V652M966.5 637V652M967.5 643V652M968.5 645V657M969.5 644V653M970.5 646V659M971.5 644V657M972.5 647V661M973.5 643V653M974.5 646V654M975.5 638V653M976.5 639V654M977.5 644V654M978.5 645V657M979.5 644V657M980.5 644V656M981.5 643V653M982.5 643V653M983.5 641V654M984.5 644V656M985.5 640V655M986.5 643V653M987.5 643V659M988.5 644V656M989.5 644V652M990.5 642V655M991.5 642V651M992.5 644V653M993.5 644V654M994.5 648V658M995.5 647V656M996.5 644V654M997.5 644V656M998.5 644V655M999.5 646V655M1000.5 644V654" stroke="#000" stroke-width="1.05"/><rect x="538" y="401" width="3" height="250" fill="#000"/><rect x="538" y="598" width="4" height="52" fill="#000"/><rect x="904" y="602" width="2" height="40" fill="#000"/><circle cx="905" cy="600.5" r="2.2" fill="none" stroke="#000" stroke-width="1.6"/></svg>
<div class="t" style="left:900.97px;top:583.22px;font-size:14.5px;line-height:14.5px;font-weight:700;color:#000;font-family:'Liberation Sans', sans-serif;">2</div>
<div class="t" style="left:67.62px;top:394.47px;font-size:13.5px;line-height:13.5px;font-weight:700;color:#000;font-family:'Liberation Sans', sans-serif;transform:scaleX(1.0500);transform-origin:0 0;">0</div>
<div class="t" style="left:55.01px;top:451.90px;font-size:13.5px;line-height:13.5px;font-weight:700;color:#000;font-family:'Liberation Sans', sans-serif;transform:scaleX(1.0500);transform-origin:0 0;">-20</div>
<div class="t" style="left:55.01px;top:509.33px;font-size:13.5px;line-height:13.5px;font-weight:700;color:#000;font-family:'Liberation Sans', sans-serif;transform:scaleX(1.0500);transform-origin:0 0;">-40</div>
<div class="t" style="left:55.01px;top:566.76px;font-size:13.5px;line-height:13.5px;font-weight:700;color:#000;font-family:'Liberation Sans', sans-serif;transform:scaleX(1.0500);transform-origin:0 0;">-60</div>
<div class="t" style="left:55.01px;top:624.19px;font-size:13.5px;line-height:13.5px;font-weight:700;color:#000;font-family:'Liberation Sans', sans-serif;transform:scaleX(1.0500);transform-origin:0 0;">-80</div>
<div class="t" style="left:47.13px;top:681.62px;font-size:13.5px;line-height:13.5px;font-weight:700;color:#000;font-family:'Liberation Sans', sans-serif;transform:scaleX(1.0500);transform-origin:0 0;">-100</div>
<div class="t" style="left:47.13px;top:739.05px;font-size:13.5px;line-height:13.5px;font-weight:700;color:#000;font-family:'Liberation Sans', sans-serif;transform:scaleX(1.0500);transform-origin:0 0;">-120</div>
<div class="t" style="left:47.13px;top:796.48px;font-size:13.5px;line-height:13.5px;font-weight:700;color:#000;font-family:'Liberation Sans', sans-serif;transform:scaleX(1.0500);transform-origin:0 0;">-140</div>
<div class="t" style="left:47.13px;top:853.91px;font-size:13.5px;line-height:13.5px;font-weight:700;color:#000;font-family:'Liberation Sans', sans-serif;transform:scaleX(1.0500);transform-origin:0 0;">-160</div>
<div class="t" style="left:47.13px;top:911.34px;font-size:13.5px;line-height:13.5px;font-weight:700;color:#000;font-family:'Liberation Sans', sans-serif;transform:scaleX(1.0500);transform-origin:0 0;">-180</div>
<div class="t" style="left:47.13px;top:968.77px;font-size:13.5px;line-height:13.5px;font-weight:700;color:#000;font-family:'Liberation Sans', sans-serif;transform:scaleX(1.0500);transform-origin:0 0;">-200</div>
<div class="t" style="left:75.77px;top:981.57px;font-size:13.5px;line-height:13.5px;font-weight:700;color:#000;font-family:'Liberation Sans', sans-serif;transform:scaleX(1.0200);transform-origin:0 0;">6</div>
<div class="t" style="left:162.18px;top:981.57px;font-size:13.5px;line-height:13.5px;font-weight:700;color:#000;font-family:'Liberation Sans', sans-serif;transform:scaleX(1.0200);transform-origin:0 0;">7.2</div>
<div class="t" style="left:254.33px;top:981.57px;font-size:13.5px;line-height:13.5px;font-weight:700;color:#000;font-family:'Liberation Sans', sans-serif;transform:scaleX(1.0200);transform-origin:0 0;">8.4</div>
<div class="t" style="left:346.48px;top:981.57px;font-size:13.5px;line-height:13.5px;font-weight:700;color:#000;font-family:'Liberation Sans', sans-serif;transform:scaleX(1.0200);transform-origin:0 0;">9.6</div>
<div class="t" style="left:434.80px;top:981.57px;font-size:13.5px;line-height:13.5px;font-weight:700;color:#000;font-family:'Liberation Sans', sans-serif;transform:scaleX(1.0200);transform-origin:0 0;">10.8</div>
<div class="t" style="left:532.69px;top:981.57px;font-size:13.5px;line-height:13.5px;font-weight:700;color:#000;font-family:'Liberation Sans', sans-serif;transform:scaleX(1.0200);transform-origin:0 0;">12</div>
<div class="t" style="left:619.10px;top:981.57px;font-size:13.5px;line-height:13.5px;font-weight:700;color:#000;font-family:'Liberation Sans', sans-serif;transform:scaleX(1.0200);transform-origin:0 0;">13.2</div>
<div class="t" style="left:711.25px;top:981.57px;font-size:13.5px;line-height:13.5px;font-weight:700;color:#000;font-family:'Liberation Sans', sans-serif;transform:scaleX(1.0200);transform-origin:0 0;">14.4</div>
<div class="t" style="left:803.40px;top:981.57px;font-size:13.5px;line-height:13.5px;font-weight:700;color:#000;font-family:'Liberation Sans', sans-serif;transform:scaleX(1.0200);transform-origin:0 0;">15.6</div>
<div class="t" style="left:895.55px;top:981.57px;font-size:13.5px;line-height:13.5px;font-weight:700;color:#000;font-family:'Liberation Sans', sans-serif;transform:scaleX(1.0200);transform-origin:0 0;">16.8</div>
<div class="t" style="left:993.44px;top:981.57px;font-size:13.5px;line-height:13.5px;font-weight:700;color:#000;font-family:'Liberation Sans', sans-serif;transform:scaleX(1.0200);transform-origin:0 0;">18</div>
<div class="t" style="left:32.00px;top:370.40px;font-size:13.7px;line-height:13.7px;font-weight:700;color:#000;font-family:'Liberation Sans', sans-serif;transform:scaleX(1.1030);transform-origin:0 0;">A(dBr)</div>
<div class="t" style="left:277.00px;top:370.40px;font-size:13.7px;line-height:13.7px;font-weight:700;color:#000;font-family:'Liberation Sans', sans-serif;transform:scaleX(1.0588);transform-origin:0 0;">A:&nbsp;f1=&nbsp;11.998585</div>
<div class="t" style="left:402.00px;top:370.40px;font-size:13.7px;line-height:13.7px;font-weight:700;color:#000;font-family:'Liberation Sans', sans-serif;transform:scaleX(1.0770);transform-origin:0 0;">kHz&nbsp;V1=</div>
<div class="t" style="left:487.00px;top:370.40px;font-size:13.7px;line-height:13.7px;font-weight:700;color:#000;font-family:'Liberation Sans', sans-serif;transform:scaleX(1.0728);transform-origin:0 0;">7.24&nbsp;dBr</div>
<div class="t" style="left:554.00px;top:370.40px;font-size:13.7px;line-height:13.7px;font-weight:700;color:#000;font-family:'Liberation Sans', sans-serif;transform:scaleX(1.0480);transform-origin:0 0;">f2=&nbsp;16.743830</div>
<div class="t" style="left:659.00px;top:370.40px;font-size:13.7px;line-height:13.7px;font-weight:700;color:#000;font-family:'Liberation Sans', sans-serif;transform:scaleX(1.0770);transform-origin:0 0;">kHz&nbsp;V2=</div>
<div class="t" style="left:733.00px;top:370.40px;font-size:13.7px;line-height:13.7px;font-weight:700;color:#000;font-family:'Liberation Sans', sans-serif;transform:scaleX(1.0567);transform-origin:0 0;">-69.26&nbsp;dBr</div>
<div style="left:15px;top:994px;width:94px;height:16px;background:#141414;"></div>
<div class="t" style="left:15.00px;top:995.57px;font-size:13.5px;line-height:13.5px;font-weight:700;color:#fff;font-family:'Liberation Sans', sans-serif;transform:scaleX(1.0898);transform-origin:0 0;">Zero&nbsp;Padding</div>
<div class="t" style="left:121.50px;top:995.57px;font-size:13.5px;line-height:13.5px;font-weight:700;color:#000;font-family:'Liberation Sans', sans-serif;transform:scaleX(1.0811);transform-origin:0 0;">Resolution:&nbsp;0.732422Hz,&nbsp;1Hz&nbsp;(0.000s)</div>
<div style="left:13px;top:1013px;width:1033px;height:18px;background:#f0f0f0;"></div>
<svg style="left:18px;top:1018px" width="8" height="9"><path d="M6 1 L2 4.5 L6 8" fill="none" stroke="#606060" stroke-width="1.6"/></svg>
<svg style="left:1034px;top:1018px" width="8" height="9"><path d="M2 1 L6 4.5 L2 8" fill="none" stroke="#606060" stroke-width="1.6"/></svg>
<div style="left:1061px;top:95px;width:317px;height:156px;background:#ff0000;border:1px solid #7d7d7d;"></div>
<div style="left:1062px;top:96px;width:315px;height:30px;background:#fff;"></div>
<svg style="left:1071px;top:103px" width="16" height="17"><path d="M0 0h3v1h-3zM0 5h3v1h-3zM0 0h1v6h-1zM3 1h1v4h-1z" fill="#0000ff"/><path d="M5 0h3v1h-3zM5 5h3v1h-3zM5 0h1v6h-1zM8 1h1v4h-1z" fill="#ff0000"/><path d="M10 0h3v1h-3zM10 3h3v1h-3zM10 0h1v6h-1zM13 1h1v2h-1z" fill="#00e000"/><circle cx="7" cy="10.5" r="3" fill="none" stroke="#000" stroke-width="1.2"/><path d="M5.5 10.5H8.5M7 9V12M9.3 12.8L11.5 15" stroke="#000" stroke-width="1.1"/></svg>
<div class="t" style="left:1091.00px;top:104.84px;font-size:12px;line-height:12px;font-weight:400;color:#a0a0a0;font-family:'Liberation Sans', sans-serif;transform:scaleX(0.9200);transform-origin:0 0;">Jitter&nbsp;peak&nbsp;&nbsp;63</div>
<div style="left:1257px;top:110px;width:11px;height:1px;background:#8a8a8a;"></div>
<div style="left:1303px;top:105px;width:10px;height:10px;border:1px solid #8a8a8a;"></div>
<svg style="left:1349px;top:105px" width="11" height="11"><path d="M0.5 0.5L10.5 10.5M10.5 0.5L0.5 10.5" stroke="#8a8a8a" stroke-width="1.1"/></svg>
<svg style="left:0;top:0" width="1920" height="1080"><rect x="1071" y="180" width="28" height="11" fill="#000"/><path transform="translate(1112.24,154.86) scale(0.7934,1.1457)" d="M 1.42 10 L 1.42 0 L 26.97 0 L 11.36 50" fill="none" stroke="#000" stroke-width="8.48" stroke-linecap="round" stroke-linejoin="round"/><path transform="translate(1151.24,154.86) scale(0.7934,1.1457)" d="M 24.13 3 C 22 1 19.16 0 17.03 0 C 7.81 0 2.13 11 2.13 28 C 2.13 43 7.1 50 14.19 50 C 22 50 26.26 43 26.26 34 C 26.26 25 22 20 14.9 20 C 9.23 20 4.97 24 2.13 30" fill="none" stroke="#000" stroke-width="8.48" stroke-linecap="round" stroke-linejoin="round"/><ellipse cx="1201.50" cy="209.97" rx="4.97" ry="7.04" fill="#000"/><path transform="translate(1229.24,154.86) scale(0.7934,1.1457)" d="M 1.42 10 L 1.42 0 L 26.97 0 L 11.36 50" fill="none" stroke="#000" stroke-width="8.48" stroke-linecap="round" stroke-linejoin="round"/><path transform="translate(1307.24,154.86) scale(0.7934,1.1457)" d="M 18.45 0 L 24.84 0 L 24.84 50 L 31.58 50 M 24.84 30 C 24.84 21 19.87 16 12.06 16 C 3.55 16 -3.19 22 -3.19 33 C -3.19 44 3.55 50 12.06 50 C 19.87 50 24.84 45 24.84 38" fill="none" stroke="#000" stroke-width="8.48" stroke-linecap="round" stroke-linejoin="round"/><path transform="translate(1346.24,154.86) scale(0.7934,1.1457)" d="M -3.9 3 L 18.45 3 C 26.26 3 29.81 8 29.81 14 C 29.81 21 25.55 25 18.45 25 L 2.84 25 M 18.45 25 C 27.68 25 32.29 30 32.29 38 C 32.29 46 27.68 50 19.16 50 L -3.9 50 M 2.84 3 L 2.84 50" fill="none" stroke="#000" stroke-width="8.48" stroke-linecap="round" stroke-linejoin="round"/></svg>
<div style="left:1061px;top:257px;width:316px;height:73px;background:#e6e6e6;border:1px solid #7d7d7d;"></div>
<div style="left:1062px;top:258px;width:314px;height:30px;background:#fff;"></div>
<svg style="left:1071px;top:265px" width="16" height="17"><path d="M0 0h3v1h-3zM0 5h3v1h-3zM0 0h1v6h-1zM3 1h1v4h-1z" fill="#0000ff"/><path d="M5 0h3v1h-3zM5 5h3v1h-3zM5 0h1v6h-1zM8 1h1v4h-1z" fill="#ff0000"/><path d="M10 0h3v1h-3zM10 3h3v1h-3zM10 0h1v6h-1zM13 1h1v2h-1z" fill="#00e000"/><circle cx="7" cy="10.5" r="3" fill="none" stroke="#000" stroke-width="1.2"/><path d="M5.5 10.5H8.5M7 9V12M9.3 12.8L11.5 15" stroke="#000" stroke-width="1.1"/></svg>
<div class="t" style="left:1091.00px;top:266.84px;font-size:12px;line-height:12px;font-weight:400;color:#a0a0a0;font-family:'Liberation Sans', sans-serif;transform:scaleX(0.9200);transform-origin:0 0;">NoiseLevel_A&nbsp;&nbsp;8</div>
<div style="left:1256px;top:272px;width:11px;height:1px;background:#8a8a8a;"></div>
<div style="left:1302px;top:267px;width:10px;height:10px;border:1px solid #8a8a8a;"></div>
<svg style="left:1348px;top:267px" width="11" height="11"><path d="M0.5 0.5L10.5 10.5M10.5 0.5L0.5 10.5" stroke="#8a8a8a" stroke-width="1.1"/></svg>
<svg style="left:0;top:0" width="1920" height="1080"><rect x="1074" y="306" width="25" height="4" fill="#000"/><path transform="translate(1110.12,297.05) scale(0.6957,0.3899)" d="M 18.45 50 L 28.39 50 M 23.42 50 L 23.42 0 L 0.71 35 L 28.39 35" fill="none" stroke="#000" stroke-width="8.48" stroke-linecap="round" stroke-linejoin="round"/><path transform="translate(1144.32,297.05) scale(0.6957,0.3899)" d="M 18.45 50 L 28.39 50 M 23.42 50 L 23.42 0 L 0.71 35 L 28.39 35" fill="none" stroke="#000" stroke-width="8.48" stroke-linecap="round" stroke-linejoin="round"/><ellipse cx="1188.40" cy="315.81" rx="4.36" ry="2.39" fill="#000"/><path transform="translate(1212.72,297.05) scale(0.6957,0.3899)" d="M 24.13 3 C 22 1 19.16 0 17.03 0 C 7.81 0 2.13 11 2.13 28 C 2.13 43 7.1 50 14.19 50 C 22 50 26.26 43 26.26 34 C 26.26 25 22 20 14.9 20 C 9.23 20 4.97 24 2.13 30" fill="none" stroke="#000" stroke-width="8.48" stroke-linecap="round" stroke-linejoin="round"/><path transform="translate(1281.12,297.05) scale(0.6957,0.3899)" d="M 18.45 0 L 24.84 0 L 24.84 50 L 31.58 50 M 24.84 30 C 24.84 21 19.87 16 12.06 16 C 3.55 16 -3.19 22 -3.19 33 C -3.19 44 3.55 50 12.06 50 C 19.87 50 24.84 45 24.84 38" fill="none" stroke="#000" stroke-width="8.48" stroke-linecap="round" stroke-linejoin="round"/><path transform="translate(1315.32,297.05) scale(0.6957,0.3899)" d="M -3.9 3 L 18.45 3 C 26.26 3 29.81 8 29.81 14 C 29.81 21 25.55 25 18.45 25 L 2.84 25 M 18.45 25 C 27.68 25 32.29 30 32.29 38 C 32.29 46 27.68 50 19.16 50 L -3.9 50 M 2.84 3 L 2.84 50" fill="none" stroke="#000" stroke-width="8.48" stroke-linecap="round" stroke-linejoin="round"/><path transform="translate(1349.52,297.05) scale(0.6957,0.3899)" d="M -2.84 16 L 7.1 16 L 7.1 50 M -2.84 50 L 24.13 50 M 7.1 30 C 10.65 21 16.32 16 23.42 16 C 26.97 16 29.81 17 31.23 20" fill="none" stroke="#000" stroke-width="8.48" stroke-linecap="round" stroke-linejoin="round"/></svg>
<div style="left:1063px;top:336px;width:315px;height:73px;background:#e6e6e6;border:1px solid #7d7d7d;"></div>
<div style="left:1064px;top:337px;width:313px;height:30px;background:#fff;"></div>
<svg style="left:1073px;top:344px" width="16" height="17"><path d="M0 0h3v1h-3zM0 5h3v1h-3zM0 0h1v6h-1zM3 1h1v4h-1z" fill="#0000ff"/><path d="M5 0h3v1h-3zM5 5h3v1h-3zM5 0h1v6h-1zM8 1h1v4h-1z" fill="#ff0000"/><path d="M10 0h3v1h-3zM10 3h3v1h-3zM10 0h1v6h-1zM13 1h1v2h-1z" fill="#00e000"/><circle cx="7" cy="10.5" r="3" fill="none" stroke="#000" stroke-width="1.2"/><path d="M5.5 10.5H8.5M7 9V12M9.3 12.8L11.5 15" stroke="#000" stroke-width="1.1"/></svg>
<div class="t" style="left:1093.00px;top:345.84px;font-size:12px;line-height:12px;font-weight:400;color:#a0a0a0;font-family:'Liberation Sans', sans-serif;transform:scaleX(0.9200);transform-origin:0 0;">J&nbsp;f2&nbsp;RMS&nbsp;&nbsp;8</div>
<div style="left:1257px;top:351px;width:11px;height:1px;background:#8a8a8a;"></div>
<div style="left:1303px;top:346px;width:10px;height:10px;border:1px solid #8a8a8a;"></div>
<svg style="left:1349px;top:346px" width="11" height="11"><path d="M0.5 0.5L10.5 10.5M10.5 0.5L0.5 10.5" stroke="#8a8a8a" stroke-width="1.1"/></svg>
<svg style="left:0;top:0" width="1920" height="1080"><path transform="translate(1077.15,376.60) scale(0.6937,0.3762)" d="M 2.84 11 C 3.55 4 7.81 0 14.19 0 C 21.29 0 25.55 5 25.55 13 C 25.55 22 19.87 28 2.13 50 L 26.97 50 L 26.97 43" fill="none" stroke="#000" stroke-width="8.48" stroke-linecap="round" stroke-linejoin="round"/><ellipse cx="1121.10" cy="394.69" rx="4.35" ry="2.31" fill="#000"/><path transform="translate(1145.35,376.60) scale(0.6937,0.3762)" d="M 25.55 0 L 5.68 0 L 4.26 22 C 7.1 20 10.65 19 14.19 19 C 22 19 26.97 25 26.97 34 C 26.97 44 22 50 14.19 50 C 9.23 50 4.97 48 1.42 43" fill="none" stroke="#000" stroke-width="8.48" stroke-linecap="round" stroke-linejoin="round"/><path transform="translate(1179.45,376.60) scale(0.6937,0.3762)" d="M 4.26 47 C 6.39 49 9.23 50 11.36 50 C 20.58 50 26.26 39 26.26 22 C 26.26 7 21.29 0 14.19 0 C 6.39 0 2.13 7 2.13 16 C 2.13 25 6.39 30 13.48 30 C 19.16 30 23.42 26 26.26 20" fill="none" stroke="#000" stroke-width="8.48" stroke-linecap="round" stroke-linejoin="round"/><path transform="translate(1213.55,376.60) scale(0.6937,0.3762)" d="M 2.84 11 C 3.55 4 7.81 0 14.19 0 C 21.29 0 25.55 5 25.55 13 C 25.55 22 19.87 28 2.13 50 L 26.97 50 L 26.97 43" fill="none" stroke="#000" stroke-width="8.48" stroke-linecap="round" stroke-linejoin="round"/><path transform="translate(1281.75,376.60) scale(0.6937,0.3762)" d="M -3.9 0 L 4.26 0 L 4.26 50 M -3.9 50 L 11.36 50 M 4.26 38 L 24.13 16 M 17.03 16 L 32.29 16 M 12.77 29 L 25.55 50 M 19.87 50 L 32.29 50" fill="none" stroke="#000" stroke-width="8.48" stroke-linecap="round" stroke-linejoin="round"/><path transform="translate(1315.85,376.60) scale(0.6937,0.3762)" d="M -5.68 16 L 2.84 16 L 2.84 68 M -5.68 68 L 11.36 68 M 2.84 26 C 6.39 19 11.36 16 17.74 16 C 26.97 16 34.07 23 34.07 33 C 34.07 44 26.97 50 17.74 50 C 11.36 50 6.39 47 2.84 41" fill="none" stroke="#000" stroke-width="8.48" stroke-linecap="round" stroke-linejoin="round"/><path transform="translate(1349.95,376.60) scale(0.6937,0.3762)" d="M 26.26 20 C 23.42 17 19.16 16 14.19 16 C 6.39 16 1.42 19 1.42 25 C 1.42 31 7.1 32 14.19 33 C 22 34 27.68 36 27.68 42 C 27.68 47 22.71 50 14.9 50 C 7.81 50 2.84 48 0.35 44" fill="none" stroke="#000" stroke-width="8.48" stroke-linecap="round" stroke-linejoin="round"/></svg>
<div style="left:1062px;top:420px;width:316px;height:73px;background:#e6e6e6;border:1px solid #7d7d7d;"></div>
<div style="left:1063px;top:421px;width:314px;height:30px;background:#fff;"></div>
<svg style="left:1072px;top:428px" width="16" height="17"><path d="M0 0h3v1h-3zM0 5h3v1h-3zM0 0h1v6h-1zM3 1h1v4h-1z" fill="#0000ff"/><path d="M5 0h3v1h-3zM5 5h3v1h-3zM5 0h1v6h-1zM8 1h1v4h-1z" fill="#ff0000"/><path d="M10 0h3v1h-3zM10 3h3v1h-3zM10 0h1v6h-1zM13 1h1v2h-1z" fill="#00e000"/><circle cx="7" cy="10.5" r="3" fill="none" stroke="#000" stroke-width="1.2"/><path d="M5.5 10.5H8.5M7 9V12M9.3 12.8L11.5 15" stroke="#000" stroke-width="1.1"/></svg>
<div class="t" style="left:1092.00px;top:429.84px;font-size:12px;line-height:12px;font-weight:400;color:#a0a0a0;font-family:'Liberation Sans', sans-serif;transform:scaleX(0.9200);transform-origin:0 0;">J&nbsp;Total&nbsp;RMS&nbsp;&nbsp;8</div>
<div style="left:1257px;top:435px;width:11px;height:1px;background:#8a8a8a;"></div>
<div style="left:1303px;top:430px;width:10px;height:10px;border:1px solid #8a8a8a;"></div>
<svg style="left:1349px;top:430px" width="11" height="11"><path d="M0.5 0.5L10.5 10.5M10.5 0.5L0.5 10.5" stroke="#8a8a8a" stroke-width="1.1"/></svg>
<svg style="left:0;top:0" width="1920" height="1080"><path transform="translate(1073.34,460.86) scale(0.6314,0.3677)" d="M 2.84 7 C 4.97 2 9.23 0 14.19 0 C 20.58 0 24.84 5 24.84 12 C 24.84 19 20.58 24 12.06 24 C 22 24 26.97 30 26.97 37 C 26.97 45 21.29 50 13.48 50 C 8.52 50 4.26 48 1.42 43" fill="none" stroke="#000" stroke-width="8.48" stroke-linecap="round" stroke-linejoin="round"/><path transform="translate(1104.38,460.86) scale(0.6314,0.3677)" d="M 18.45 50 L 28.39 50 M 23.42 50 L 23.42 0 L 0.71 35 L 28.39 35" fill="none" stroke="#000" stroke-width="8.48" stroke-linecap="round" stroke-linejoin="round"/><ellipse cx="1144.38" cy="478.54" rx="3.96" ry="2.26" fill="#000"/><path transform="translate(1166.46,460.86) scale(0.6314,0.3677)" d="M 2.84 7 C 4.97 2 9.23 0 14.19 0 C 20.58 0 24.84 5 24.84 12 C 24.84 19 20.58 24 12.06 24 C 22 24 26.97 30 26.97 37 C 26.97 45 21.29 50 13.48 50 C 8.52 50 4.26 48 1.42 43" fill="none" stroke="#000" stroke-width="8.48" stroke-linecap="round" stroke-linejoin="round"/><path transform="translate(1197.50,460.86) scale(0.6314,0.3677)" d="M 25.55 0 L 5.68 0 L 4.26 22 C 7.1 20 10.65 19 14.19 19 C 22 19 26.97 25 26.97 34 C 26.97 44 22 50 14.19 50 C 9.23 50 4.97 48 1.42 43" fill="none" stroke="#000" stroke-width="8.48" stroke-linecap="round" stroke-linejoin="round"/><path transform="translate(1228.54,460.86) scale(0.6314,0.3677)" d="M 4.26 47 C 6.39 49 9.23 50 11.36 50 C 20.58 50 26.26 39 26.26 22 C 26.26 7 21.29 0 14.19 0 C 6.39 0 2.13 7 2.13 16 C 2.13 25 6.39 30 13.48 30 C 19.16 30 23.42 26 26.26 20" fill="none" stroke="#000" stroke-width="8.48" stroke-linecap="round" stroke-linejoin="round"/><path transform="translate(1290.62,460.86) scale(0.6314,0.3677)" d="M -3.9 0 L 4.26 0 L 4.26 50 M -3.9 50 L 11.36 50 M 4.26 38 L 24.13 16 M 17.03 16 L 32.29 16 M 12.77 29 L 25.55 50 M 19.87 50 L 32.29 50" fill="none" stroke="#000" stroke-width="8.48" stroke-linecap="round" stroke-linejoin="round"/><path transform="translate(1321.66,460.86) scale(0.6314,0.3677)" d="M -5.68 16 L 2.84 16 L 2.84 68 M -5.68 68 L 11.36 68 M 2.84 26 C 6.39 19 11.36 16 17.74 16 C 26.97 16 34.07 23 34.07 33 C 34.07 44 26.97 50 17.74 50 C 11.36 50 6.39 47 2.84 41" fill="none" stroke="#000" stroke-width="8.48" stroke-linecap="round" stroke-linejoin="round"/><path transform="translate(1352.70,460.86) scale(0.6314,0.3677)" d="M 26.26 20 C 23.42 17 19.16 16 14.19 16 C 6.39 16 1.42 19 1.42 25 C 1.42 31 7.1 32 14.19 33 C 22 34 27.68 36 27.68 42 C 27.68 47 22.71 50 14.9 50 C 7.81 50 2.84 48 0.35 44" fill="none" stroke="#000" stroke-width="8.48" stroke-linecap="round" stroke-linejoin="round"/></svg>
<div style="left:1062px;top:501px;width:317px;height:70px;background:#e6e6e6;border:1px solid #7d7d7d;"></div>
<div style="left:1063px;top:502px;width:315px;height:30px;background:#fff;"></div>
<svg style="left:1072px;top:509px" width="16" height="17"><path d="M0 0h3v1h-3zM0 5h3v1h-3zM0 0h1v6h-1zM3 1h1v4h-1z" fill="#0000ff"/><path d="M5 0h3v1h-3zM5 5h3v1h-3zM5 0h1v6h-1zM8 1h1v4h-1z" fill="#ff0000"/><path d="M10 0h3v1h-3zM10 3h3v1h-3zM10 0h1v6h-1zM13 1h1v2h-1z" fill="#00e000"/><circle cx="7" cy="10.5" r="3" fill="none" stroke="#000" stroke-width="1.2"/><path d="M5.5 10.5H8.5M7 9V12M9.3 12.8L11.5 15" stroke="#000" stroke-width="1.1"/></svg>
<div class="t" style="left:1092.00px;top:510.84px;font-size:12px;line-height:12px;font-weight:400;color:#a0a0a0;font-family:'Liberation Sans', sans-serif;transform:scaleX(0.9200);transform-origin:0 0;">f1&nbsp;Freq</div>
<div style="left:1258px;top:516px;width:11px;height:1px;background:#8a8a8a;"></div>
<div style="left:1304px;top:511px;width:10px;height:10px;border:1px solid #8a8a8a;"></div>
<svg style="left:1350px;top:511px" width="11" height="11"><path d="M0.5 0.5L10.5 10.5M10.5 0.5L0.5 10.5" stroke="#8a8a8a" stroke-width="1.1"/></svg>
<svg style="left:0;top:0" width="1920" height="1080"><path transform="translate(1074.35,540.80) scale(0.6306,0.3540)" d="M 3.55 9 L 14.19 0 L 14.19 50 M 2.13 50 L 26.26 50" fill="none" stroke="#000" stroke-width="8.48" stroke-linecap="round" stroke-linejoin="round"/><path transform="translate(1105.35,540.80) scale(0.6306,0.3540)" d="M 3.55 9 L 14.19 0 L 14.19 50 M 2.13 50 L 26.26 50" fill="none" stroke="#000" stroke-width="8.48" stroke-linecap="round" stroke-linejoin="round"/><ellipse cx="1145.30" cy="557.83" rx="3.95" ry="2.17" fill="#000"/><path transform="translate(1167.35,540.80) scale(0.6306,0.3540)" d="M 4.26 47 C 6.39 49 9.23 50 11.36 50 C 20.58 50 26.26 39 26.26 22 C 26.26 7 21.29 0 14.19 0 C 6.39 0 2.13 7 2.13 16 C 2.13 25 6.39 30 13.48 30 C 19.16 30 23.42 26 26.26 20" fill="none" stroke="#000" stroke-width="8.48" stroke-linecap="round" stroke-linejoin="round"/><path transform="translate(1198.35,540.80) scale(0.6306,0.3540)" d="M 4.26 47 C 6.39 49 9.23 50 11.36 50 C 20.58 50 26.26 39 26.26 22 C 26.26 7 21.29 0 14.19 0 C 6.39 0 2.13 7 2.13 16 C 2.13 25 6.39 30 13.48 30 C 19.16 30 23.42 26 26.26 20" fill="none" stroke="#000" stroke-width="8.48" stroke-linecap="round" stroke-linejoin="round"/><path transform="translate(1229.35,540.80) scale(0.6306,0.3540)" d="M 4.26 47 C 6.39 49 9.23 50 11.36 50 C 20.58 50 26.26 39 26.26 22 C 26.26 7 21.29 0 14.19 0 C 6.39 0 2.13 7 2.13 16 C 2.13 25 6.39 30 13.48 30 C 19.16 30 23.42 26 26.26 20" fill="none" stroke="#000" stroke-width="8.48" stroke-linecap="round" stroke-linejoin="round"/><path transform="translate(1291.35,540.80) scale(0.6306,0.3540)" d="M -3.9 0 L 4.26 0 L 4.26 50 M -3.9 50 L 11.36 50 M 4.26 38 L 24.13 16 M 17.03 16 L 32.29 16 M 12.77 29 L 25.55 50 M 19.87 50 L 32.29 50" fill="none" stroke="#000" stroke-width="8.48" stroke-linecap="round" stroke-linejoin="round"/><path transform="translate(1322.35,540.80) scale(0.6306,0.3540)" d="M -2.84 3 L 8.52 3 M 19.87 3 L 31.23 3 M 2.84 3 L 2.84 50 M 25.55 3 L 25.55 50 M 2.84 25 L 25.55 25 M -2.84 50 L 8.52 50 M 19.87 50 L 31.23 50" fill="none" stroke="#000" stroke-width="8.48" stroke-linecap="round" stroke-linejoin="round"/><path transform="translate(1353.35,540.80) scale(0.6306,0.3540)" d="M 0.71 23 L 0.71 16 L 26.97 16 L 1.42 50 L 28.39 50 L 28.39 41" fill="none" stroke="#000" stroke-width="8.48" stroke-linecap="round" stroke-linejoin="round"/></svg>
<div style="left:1061px;top:578px;width:320px;height:70px;background:#e6e6e6;border:1px solid #7d7d7d;"></div>
<div style="left:1062px;top:579px;width:318px;height:30px;background:#fff;"></div>
<svg style="left:1071px;top:586px" width="16" height="17"><path d="M0 0h3v1h-3zM0 5h3v1h-3zM0 0h1v6h-1zM3 1h1v4h-1z" fill="#0000ff"/><path d="M5 0h3v1h-3zM5 5h3v1h-3zM5 0h1v6h-1zM8 1h1v4h-1z" fill="#ff0000"/><path d="M10 0h3v1h-3zM10 3h3v1h-3zM10 0h1v6h-1zM13 1h1v2h-1z" fill="#00e000"/><circle cx="7" cy="10.5" r="3" fill="none" stroke="#000" stroke-width="1.2"/><path d="M5.5 10.5H8.5M7 9V12M9.3 12.8L11.5 15" stroke="#000" stroke-width="1.1"/></svg>
<div class="t" style="left:1091.00px;top:587.84px;font-size:12px;line-height:12px;font-weight:400;color:#a0a0a0;font-family:'Liberation Sans', sans-serif;transform:scaleX(0.9200);transform-origin:0 0;">f1&nbsp;RMS</div>
<div style="left:1260px;top:593px;width:11px;height:1px;background:#8a8a8a;"></div>
<div style="left:1306px;top:588px;width:10px;height:10px;border:1px solid #8a8a8a;"></div>
<svg style="left:1352px;top:588px" width="11" height="11"><path d="M0.5 0.5L10.5 10.5M10.5 0.5L0.5 10.5" stroke="#8a8a8a" stroke-width="1.1"/></svg>
<svg style="left:0;top:0" width="1920" height="1080"><path transform="translate(1067.03,617.50) scale(0.9419,0.3540)" d="M 1.42 10 L 1.42 0 L 26.97 0 L 11.36 50" fill="none" stroke="#000" stroke-width="8.48" stroke-linecap="round" stroke-linejoin="round"/><ellipse cx="1126.70" cy="634.53" rx="5.90" ry="2.17" fill="#000"/><path transform="translate(1159.63,617.50) scale(0.9419,0.3540)" d="M 2.84 11 C 3.55 4 7.81 0 14.19 0 C 21.29 0 25.55 5 25.55 13 C 25.55 22 19.87 28 2.13 50 L 26.97 50 L 26.97 43" fill="none" stroke="#000" stroke-width="8.48" stroke-linecap="round" stroke-linejoin="round"/><path transform="translate(1252.23,617.50) scale(0.9419,0.3540)" d="M 18.45 0 L 24.84 0 L 24.84 50 L 31.58 50 M 24.84 30 C 24.84 21 19.87 16 12.06 16 C 3.55 16 -3.19 22 -3.19 33 C -3.19 44 3.55 50 12.06 50 C 19.87 50 24.84 45 24.84 38" fill="none" stroke="#000" stroke-width="8.48" stroke-linecap="round" stroke-linejoin="round"/><path transform="translate(1298.53,617.50) scale(0.9419,0.3540)" d="M -3.9 3 L 18.45 3 C 26.26 3 29.81 8 29.81 14 C 29.81 21 25.55 25 18.45 25 L 2.84 25 M 18.45 25 C 27.68 25 32.29 30 32.29 38 C 32.29 46 27.68 50 19.16 50 L -3.9 50 M 2.84 3 L 2.84 50" fill="none" stroke="#000" stroke-width="8.48" stroke-linecap="round" stroke-linejoin="round"/><path transform="translate(1344.83,617.50) scale(0.9419,0.3540)" d="M -2.84 16 L 7.1 16 L 7.1 50 M -2.84 50 L 24.13 50 M 7.1 30 C 10.65 21 16.32 16 23.42 16 C 26.97 16 29.81 17 31.23 20" fill="none" stroke="#000" stroke-width="8.48" stroke-linecap="round" stroke-linejoin="round"/></svg>
<div style="left:1061px;top:655px;width:320px;height:70px;background:#e6e6e6;border:1px solid #7d7d7d;"></div>
<div style="left:1062px;top:656px;width:318px;height:30px;background:#fff;"></div>
<svg style="left:1071px;top:663px" width="16" height="17"><path d="M0 0h3v1h-3zM0 5h3v1h-3zM0 0h1v6h-1zM3 1h1v4h-1z" fill="#0000ff"/><path d="M5 0h3v1h-3zM5 5h3v1h-3zM5 0h1v6h-1zM8 1h1v4h-1z" fill="#ff0000"/><path d="M10 0h3v1h-3zM10 3h3v1h-3zM10 0h1v6h-1zM13 1h1v2h-1z" fill="#00e000"/><circle cx="7" cy="10.5" r="3" fill="none" stroke="#000" stroke-width="1.2"/><path d="M5.5 10.5H8.5M7 9V12M9.3 12.8L11.5 15" stroke="#000" stroke-width="1.1"/></svg>
<div class="t" style="left:1091.00px;top:664.84px;font-size:12px;line-height:12px;font-weight:400;color:#a0a0a0;font-family:'Liberation Sans', sans-serif;transform:scaleX(0.9200);transform-origin:0 0;">f2&nbsp;Freq</div>
<div style="left:1260px;top:670px;width:11px;height:1px;background:#8a8a8a;"></div>
<div style="left:1306px;top:665px;width:10px;height:10px;border:1px solid #8a8a8a;"></div>
<svg style="left:1352px;top:665px" width="11" height="11"><path d="M0.5 0.5L10.5 10.5M10.5 0.5L0.5 10.5" stroke="#8a8a8a" stroke-width="1.1"/></svg>
<svg style="left:0;top:0" width="1920" height="1080"><path transform="translate(1076.24,694.52) scale(0.6312,0.3591)" d="M 3.55 9 L 14.19 0 L 14.19 50 M 2.13 50 L 26.26 50" fill="none" stroke="#000" stroke-width="8.48" stroke-linecap="round" stroke-linejoin="round"/><path transform="translate(1107.27,694.52) scale(0.6312,0.3591)" d="M 24.13 3 C 22 1 19.16 0 17.03 0 C 7.81 0 2.13 11 2.13 28 C 2.13 43 7.1 50 14.19 50 C 22 50 26.26 43 26.26 34 C 26.26 25 22 20 14.9 20 C 9.23 20 4.97 24 2.13 30" fill="none" stroke="#000" stroke-width="8.48" stroke-linecap="round" stroke-linejoin="round"/><ellipse cx="1147.26" cy="711.79" rx="3.96" ry="2.21" fill="#000"/><path transform="translate(1169.33,694.52) scale(0.6312,0.3591)" d="M 1.42 10 L 1.42 0 L 26.97 0 L 11.36 50" fill="none" stroke="#000" stroke-width="8.48" stroke-linecap="round" stroke-linejoin="round"/><path transform="translate(1200.36,694.52) scale(0.6312,0.3591)" d="M 18.45 50 L 28.39 50 M 23.42 50 L 23.42 0 L 0.71 35 L 28.39 35" fill="none" stroke="#000" stroke-width="8.48" stroke-linecap="round" stroke-linejoin="round"/><path transform="translate(1231.39,694.52) scale(0.6312,0.3591)" d="M 18.45 50 L 28.39 50 M 23.42 50 L 23.42 0 L 0.71 35 L 28.39 35" fill="none" stroke="#000" stroke-width="8.48" stroke-linecap="round" stroke-linejoin="round"/><path transform="translate(1293.45,694.52) scale(0.6312,0.3591)" d="M -3.9 0 L 4.26 0 L 4.26 50 M -3.9 50 L 11.36 50 M 4.26 38 L 24.13 16 M 17.03 16 L 32.29 16 M 12.77 29 L 25.55 50 M 19.87 50 L 32.29 50" fill="none" stroke="#000" stroke-width="8.48" stroke-linecap="round" stroke-linejoin="round"/><path transform="translate(1324.48,694.52) scale(0.6312,0.3591)" d="M -2.84 3 L 8.52 3 M 19.87 3 L 31.23 3 M 2.84 3 L 2.84 50 M 25.55 3 L 25.55 50 M 2.84 25 L 25.55 25 M -2.84 50 L 8.52 50 M 19.87 50 L 31.23 50" fill="none" stroke="#000" stroke-width="8.48" stroke-linecap="round" stroke-linejoin="round"/><path transform="translate(1355.51,694.52) scale(0.6312,0.3591)" d="M 0.71 23 L 0.71 16 L 26.97 16 L 1.42 50 L 28.39 50 L 28.39 41" fill="none" stroke="#000" stroke-width="8.48" stroke-linecap="round" stroke-linejoin="round"/></svg>
<div style="left:1061px;top:734px;width:321px;height:70px;background:#e6e6e6;border:1px solid #7d7d7d;"></div>
<div style="left:1062px;top:735px;width:319px;height:30px;background:#fff;"></div>
<svg style="left:1071px;top:742px" width="16" height="17"><path d="M0 0h3v1h-3zM0 5h3v1h-3zM0 0h1v6h-1zM3 1h1v4h-1z" fill="#0000ff"/><path d="M5 0h3v1h-3zM5 5h3v1h-3zM5 0h1v6h-1zM8 1h1v4h-1z" fill="#ff0000"/><path d="M10 0h3v1h-3zM10 3h3v1h-3zM10 0h1v6h-1zM13 1h1v2h-1z" fill="#00e000"/><circle cx="7" cy="10.5" r="3" fill="none" stroke="#000" stroke-width="1.2"/><path d="M5.5 10.5H8.5M7 9V12M9.3 12.8L11.5 15" stroke="#000" stroke-width="1.1"/></svg>
<div class="t" style="left:1091.00px;top:743.84px;font-size:12px;line-height:12px;font-weight:400;color:#a0a0a0;font-family:'Liberation Sans', sans-serif;transform:scaleX(0.9200);transform-origin:0 0;">f2RMS_A&nbsp;&nbsp;8</div>
<div style="left:1261px;top:749px;width:11px;height:1px;background:#8a8a8a;"></div>
<div style="left:1307px;top:744px;width:10px;height:10px;border:1px solid #8a8a8a;"></div>
<svg style="left:1353px;top:744px" width="11" height="11"><path d="M0.5 0.5L10.5 10.5M10.5 0.5L0.5 10.5" stroke="#8a8a8a" stroke-width="1.1"/></svg>
<svg style="left:0;top:0" width="1920" height="1080"><rect x="1071" y="782" width="25" height="4" fill="#000"/><path transform="translate(1108.08,773.42) scale(0.7128,0.3591)" d="M 1.42 10 L 1.42 0 L 26.97 0 L 11.36 50" fill="none" stroke="#000" stroke-width="8.48" stroke-linecap="round" stroke-linejoin="round"/><path transform="translate(1143.12,773.42) scale(0.7128,0.3591)" d="M 14.19 0 C 22 0 26.97 10 26.97 25 C 26.97 40 22 50 14.19 50 C 6.39 50 1.42 40 1.42 25 C 1.42 10 6.39 0 14.19 0 Z" fill="none" stroke="#000" stroke-width="8.48" stroke-linecap="round" stroke-linejoin="round"/><ellipse cx="1188.28" cy="790.69" rx="4.47" ry="2.21" fill="#000"/><path transform="translate(1213.20,773.42) scale(0.7128,0.3591)" d="M 3.55 9 L 14.19 0 L 14.19 50 M 2.13 50 L 26.26 50" fill="none" stroke="#000" stroke-width="8.48" stroke-linecap="round" stroke-linejoin="round"/><path transform="translate(1283.28,773.42) scale(0.7128,0.3591)" d="M 18.45 0 L 24.84 0 L 24.84 50 L 31.58 50 M 24.84 30 C 24.84 21 19.87 16 12.06 16 C 3.55 16 -3.19 22 -3.19 33 C -3.19 44 3.55 50 12.06 50 C 19.87 50 24.84 45 24.84 38" fill="none" stroke="#000" stroke-width="8.48" stroke-linecap="round" stroke-linejoin="round"/><path transform="translate(1318.32,773.42) scale(0.7128,0.3591)" d="M -3.9 3 L 18.45 3 C 26.26 3 29.81 8 29.81 14 C 29.81 21 25.55 25 18.45 25 L 2.84 25 M 18.45 25 C 27.68 25 32.29 30 32.29 38 C 32.29 46 27.68 50 19.16 50 L -3.9 50 M 2.84 3 L 2.84 50" fill="none" stroke="#000" stroke-width="8.48" stroke-linecap="round" stroke-linejoin="round"/><path transform="translate(1353.36,773.42) scale(0.7128,0.3591)" d="M -2.84 16 L 7.1 16 L 7.1 50 M -2.84 50 L 24.13 50 M 7.1 30 C 10.65 21 16.32 16 23.42 16 C 26.97 16 29.81 17 31.23 20" fill="none" stroke="#000" stroke-width="8.48" stroke-linecap="round" stroke-linejoin="round"/></svg>
<div style="left:0px;top:44px;width:1920px;height:1px;background:#fff;"></div>
<div style="left:0px;top:68px;width:1920px;height:1px;background:#fff;"></div>
<div style="left:3px;top:45px;width:1px;height:21px;background:#a0a0a0;"></div>
<div style="left:4px;top:45px;width:1px;height:21px;background:#fff;"></div>
<div style="left:3px;top:69px;width:1px;height:21px;background:#a0a0a0;"></div>
<div style="left:4px;top:69px;width:1px;height:21px;background:#fff;"></div>
<svg style="left:10px;top:48px" width="17" height="16"><path d="M1 5 H6 L7 6 H11 V8 H4 L1 14 Z" fill="#9a9a9a"/><path d="M1 14 L4 8 H15 L12 14 Z" fill="#b4b4b4"/><path d="M9 3 C11 0 14 1 15 4 M13 4 H15.5 V1.5" fill="none" stroke="#9a9a9a" stroke-width="1.2"/></svg>
<svg style="left:34px;top:48px" width="15" height="16"><rect x="0" y="1" width="14" height="14" fill="#9a9a9a"/><rect x="3" y="2" width="8" height="5" fill="#f0f0f0"/><rect x="9" y="11" width="2" height="3" fill="#f0f0f0"/></svg>
<div class="t" style="left:86.00px;top:49.40px;font-size:13.7px;line-height:13.7px;font-weight:700;color:#000;font-family:'Liberation Sans', sans-serif;transform:scaleX(0.9906);transform-origin:0 0;">Trigger</div>
<div style="left:167px;top:45px;width:137px;height:22px;background:#fff;box-shadow:inset 1px 1px 0 #a0a0a0, inset 2px 2px 0 #696969;"></div>
<div style="left:287px;top:47px;width:17px;height:20px;background:#f0f0f0;box-shadow:inset 1px 1px 0 #fff, inset -1px -1px 0 #696969, inset -2px -2px 0 #a0a0a0;"></div>
<svg style="left:291.5px;top:54.5px" width="7" height="4"><path d="M0 0H7L3.5 4Z" fill="#000"/></svg>
<div class="t" style="left:171.00px;top:49.57px;font-size:13.5px;line-height:13.5px;font-weight:700;color:#000;font-family:'Liberation Sans', sans-serif;">Normal</div>
<div style="left:307px;top:45px;width:94px;height:22px;background:#f0f0f0;box-shadow:inset 1px 1px 0 #a0a0a0, inset 2px 2px 0 #696969;"></div>
<div style="left:384px;top:47px;width:17px;height:20px;background:#f0f0f0;box-shadow:inset 1px 1px 0 #fff, inset -1px -1px 0 #696969, inset -2px -2px 0 #a0a0a0;"></div>
<svg style="left:388.5px;top:54.5px" width="7" height="4"><path d="M0 0H7L3.5 4Z" fill="#a0a0a0"/></svg>
<div class="t" style="left:311.00px;top:49.57px;font-size:13.5px;line-height:13.5px;font-weight:700;color:#8d8d8d;font-family:'Liberation Sans', sans-serif;">A</div>
<div style="left:404px;top:45px;width:94px;height:22px;background:#fff;box-shadow:inset 1px 1px 0 #a0a0a0, inset 2px 2px 0 #696969;"></div>
<div style="left:481px;top:47px;width:17px;height:20px;background:#f0f0f0;box-shadow:inset 1px 1px 0 #fff, inset -1px -1px 0 #696969, inset -2px -2px 0 #a0a0a0;"></div>
<svg style="left:485.5px;top:54.5px" width="7" height="4"><path d="M0 0H7L3.5 4Z" fill="#000"/></svg>
<div class="t" style="left:408.00px;top:49.57px;font-size:13.5px;line-height:13.5px;font-weight:700;color:#000;font-family:'Liberation Sans', sans-serif;">Up</div>
<div style="left:501px;top:45px;width:87px;height:22px;background:#fff;box-shadow:inset 1px 1px 0 #a0a0a0, inset 2px 2px 0 #696969, inset -1px -1px 0 #f0f0f0, inset -2px -2px 0 #e3e3e3;"></div>
<div class="t" style="left:534.60px;top:49.40px;font-size:13.7px;line-height:13.7px;font-weight:700;color:#000;font-family:'Liberation Sans', sans-serif;">0%</div>
<div style="left:588px;top:45px;width:17px;height:11px;background:#f0f0f0;box-shadow:inset 1px 1px 0 #fff, inset -1px -1px 0 #696969, inset -2px -2px 0 #a0a0a0;"></div>
<div style="left:588px;top:56px;width:17px;height:11px;background:#f0f0f0;box-shadow:inset 1px 1px 0 #fff, inset -1px -1px 0 #696969, inset -2px -2px 0 #a0a0a0;"></div>
<svg style="left:594px;top:49px" width="5" height="3"><path d="M0 3H5L2.5 0Z" fill="#000"/></svg>
<svg style="left:594px;top:60px" width="5" height="3"><path d="M0 0H5L2.5 3Z" fill="#000"/></svg>
<div style="left:606px;top:47px;width:1px;height:18px;background:#a0a0a0;"></div>
<div style="left:625px;top:45px;width:88px;height:22px;background:#fff;box-shadow:inset 1px 1px 0 #a0a0a0, inset 2px 2px 0 #696969, inset -1px -1px 0 #f0f0f0, inset -2px -2px 0 #e3e3e3;"></div>
<div class="t" style="left:659.10px;top:49.40px;font-size:13.7px;line-height:13.7px;font-weight:700;color:#000;font-family:'Liberation Sans', sans-serif;">0%</div>
<div style="left:713px;top:45px;width:17px;height:11px;background:#f0f0f0;box-shadow:inset 1px 1px 0 #fff, inset -1px -1px 0 #696969, inset -2px -2px 0 #a0a0a0;"></div>
<div style="left:713px;top:56px;width:17px;height:11px;background:#f0f0f0;box-shadow:inset 1px 1px 0 #fff, inset -1px -1px 0 #696969, inset -2px -2px 0 #a0a0a0;"></div>
<svg style="left:719px;top:49px" width="5" height="3"><path d="M0 3H5L2.5 0Z" fill="#000"/></svg>
<svg style="left:719px;top:60px" width="5" height="3"><path d="M0 0H5L2.5 3Z" fill="#000"/></svg>
<div style="left:731px;top:47px;width:1px;height:18px;background:#a0a0a0;"></div>
<div style="left:750px;top:45px;width:96px;height:22px;background:#fff;box-shadow:inset 1px 1px 0 #a0a0a0, inset 2px 2px 0 #696969;"></div>
<div style="left:829px;top:47px;width:17px;height:20px;background:#f0f0f0;box-shadow:inset 1px 1px 0 #fff, inset -1px -1px 0 #696969, inset -2px -2px 0 #a0a0a0;"></div>
<svg style="left:833.5px;top:54.5px" width="7" height="4"><path d="M0 0H7L3.5 4Z" fill="#000"/></svg>
<div class="t" style="left:754.00px;top:49.57px;font-size:13.5px;line-height:13.5px;font-weight:700;color:#000;font-family:'Liberation Sans', sans-serif;">NIL</div>
<div class="t" style="left:879.00px;top:49.40px;font-size:13.7px;line-height:13.7px;font-weight:700;color:#000;font-family:'Liberation Sans', sans-serif;transform:scaleX(0.9747);transform-origin:0 0;">Sample</div>
<div style="left:958px;top:45px;width:193px;height:22px;background:#fff;box-shadow:inset 1px 1px 0 #a0a0a0, inset 2px 2px 0 #696969;"></div>
<div style="left:1134px;top:47px;width:17px;height:20px;background:#f0f0f0;box-shadow:inset 1px 1px 0 #fff, inset -1px -1px 0 #696969, inset -2px -2px 0 #a0a0a0;"></div>
<svg style="left:1138.5px;top:54.5px" width="7" height="4"><path d="M0 0H7L3.5 4Z" fill="#000"/></svg>
<div class="t" style="left:962.00px;top:49.57px;font-size:13.5px;line-height:13.5px;font-weight:700;color:#000;font-family:'Liberation Sans', sans-serif;">48kHz</div>
<div style="left:1154px;top:45px;width:107px;height:22px;background:#fff;box-shadow:inset 1px 1px 0 #a0a0a0, inset 2px 2px 0 #696969;"></div>
<div style="left:1244px;top:47px;width:17px;height:20px;background:#f0f0f0;box-shadow:inset 1px 1px 0 #fff, inset -1px -1px 0 #696969, inset -2px -2px 0 #a0a0a0;"></div>
<svg style="left:1248.5px;top:54.5px" width="7" height="4"><path d="M0 0H7L3.5 4Z" fill="#000"/></svg>
<div class="t" style="left:1158.00px;top:49.57px;font-size:13.5px;line-height:13.5px;font-weight:700;color:#000;font-family:'Liberation Sans', sans-serif;">A</div>
<div style="left:1263px;top:45px;width:119px;height:22px;background:#fff;box-shadow:inset 1px 1px 0 #a0a0a0, inset 2px 2px 0 #696969;"></div>
<div style="left:1365px;top:47px;width:17px;height:20px;background:#f0f0f0;box-shadow:inset 1px 1px 0 #fff, inset -1px -1px 0 #696969, inset -2px -2px 0 #a0a0a0;"></div>
<svg style="left:1369.5px;top:54.5px" width="7" height="4"><path d="M0 0H7L3.5 4Z" fill="#000"/></svg>
<div class="t" style="left:1267.00px;top:49.57px;font-size:13.5px;line-height:13.5px;font-weight:700;color:#000;font-family:'Liberation Sans', sans-serif;">24Bit</div>
<div class="t" style="left:1411.00px;top:49.40px;font-size:13.7px;line-height:13.7px;font-weight:700;color:#000;font-family:'Liberation Sans', sans-serif;transform:scaleX(0.9783);transform-origin:0 0;">Point</div>
<div style="left:1471px;top:45px;width:179px;height:22px;background:#fff;box-shadow:inset 1px 1px 0 #a0a0a0, inset 2px 2px 0 #696969;"></div>
<div style="left:1633px;top:47px;width:17px;height:20px;background:#f0f0f0;box-shadow:inset 1px 1px 0 #fff, inset -1px -1px 0 #696969, inset -2px -2px 0 #a0a0a0;"></div>
<svg style="left:1637.5px;top:54.5px" width="7" height="4"><path d="M0 0H7L3.5 4Z" fill="#000"/></svg>
<div class="t" style="left:1475.00px;top:49.57px;font-size:13.5px;line-height:13.5px;font-weight:700;color:#000;font-family:'Liberation Sans', sans-serif;">48000</div>
<div style="left:1657px;top:50px;width:13px;height:13px;background:#fff;box-shadow:inset 1px 1px 0 #a0a0a0, inset 2px 2px 0 #696969, inset -1px -1px 0 #fff, inset -2px -2px 0 #e3e3e3;"></div>
<div class="t" style="left:1676.00px;top:49.40px;font-size:13.7px;line-height:13.7px;font-weight:700;color:#000;font-family:'Liberation Sans', sans-serif;transform:scaleX(0.9662);transform-origin:0 0;">Roll</div>
<div style="left:1752px;top:45px;width:101px;height:22px;background:#f0f0f0;box-shadow:inset 1px 1px 0 #e3e3e3, inset 2px 2px 0 #fff, inset -1px -1px 0 #696969, inset -2px -2px 0 #a0a0a0;"></div>
<div class="t" style="left:1779.50px;top:49.40px;font-size:13.7px;line-height:13.7px;font-weight:700;color:#a0a0a0;font-family:'Liberation Sans', sans-serif;transform:scaleX(0.9534);transform-origin:0 0;">Record</div>
<div style="left:1855px;top:45px;width:63px;height:22px;background:#f0f0f0;box-shadow:inset 1px 1px 0 #e3e3e3, inset 2px 2px 0 #fff, inset -1px -1px 0 #696969, inset -2px -2px 0 #a0a0a0;"></div>
<div class="t" style="left:1873.25px;top:49.40px;font-size:13.7px;line-height:13.7px;font-weight:700;color:#000;font-family:'Liberation Sans', sans-serif;transform:scaleX(0.8816);transform-origin:0 0;">Auto</div>
<div style="left:7px;top:69px;width:22px;height:22px;background:repeating-conic-gradient(#fff 0 25%,#e6e6e6 0 50%) 0 0/2px 2px;box-shadow:inset 1px 1px 0 #a0a0a0, inset -1px -1px 0 #fff;"></div>
<div style="left:30px;top:69px;width:22px;height:22px;background:repeating-conic-gradient(#fff 0 25%,#e6e6e6 0 50%) 0 0/2px 2px;box-shadow:inset 1px 1px 0 #a0a0a0, inset -1px -1px 0 #fff;"></div>
<div style="left:53px;top:69px;width:22px;height:22px;background:repeating-conic-gradient(#fff 0 25%,#e6e6e6 0 50%) 0 0/2px 2px;box-shadow:inset 1px 1px 0 #a0a0a0, inset -1px -1px 0 #fff;"></div>
<div style="left:122px;top:69px;width:22px;height:22px;background:repeating-conic-gradient(#fff 0 25%,#e6e6e6 0 50%) 0 0/2px 2px;box-shadow:inset 1px 1px 0 #a0a0a0, inset -1px -1px 0 #fff;"></div>
<svg style="left:13px;top:73px" width="13" height="13"><path d="M4 0.5H9L12.5 4V9L9 12.5H4L0.5 9V4Z" fill="#00f000"/></svg><svg style="left:34px;top:72px" width="16" height="16"><rect width="16" height="16" fill="#00f000"/><path d="M0 7 C3 2 5 2 7 6 S10 12 12 12 S15 10 16 8" fill="none" stroke="#ff0" stroke-width="1.2"/></svg><svg style="left:57px;top:72px" width="16" height="16"><rect width="16" height="16" fill="#0000ff"/><path d="M1.5 1V15 M4.5 4V15 M7.5 7V15 M10.5 9V15 M13.5 10V15 M0 14.5H16" stroke="#ff0" stroke-width="1"/></svg><svg style="left:79px;top:72px" width="16" height="16" shape-rendering="crispEdges"><rect width="16" height="16" fill="#800080"/><path d="M2 1h2v1h-2z M2 7h2v1h-2z M2 13h2v1h-2z M1 2h1v5h-1z M4 2h1v5h-1z M1 8h1v5h-1z M4 8h1v5h-1z M7 1h2v1h-2z M7 7h2v1h-2z M7 13h2v1h-2z M6 2h1v5h-1z M9 2h1v5h-1z M6 8h1v5h-1z M9 8h1v5h-1z M12 1h2v1h-2z M12 7h2v1h-2z M12 13h2v1h-2z M11 2h1v5h-1z M14 2h1v5h-1z M11 8h1v5h-1z M14 8h1v5h-1z M10 13h1v1h-1z" fill="#ffff00"/></svg><svg style="left:102px;top:72px" width="16" height="16"><rect width="16" height="16" fill="#fff"/><path d="M1.5 5 L5 1.5 H14.5 V12 L11.5 14.5 H1.5 Z" fill="#fff" stroke="#000" stroke-width="1.3"/><path d="M3.5 8.5 L4.5 5.5 L8 3.5 V8.5 Z" fill="#ff0" stroke="#000" stroke-width="0.6"/><path d="M9 3 L13 7 L11.5 10 L9 8.5 Z" fill="#ff0" stroke="#000" stroke-width="0.6"/><path d="M3 9 H9 L10 8.5 H11.5 V11.5 L10.5 12.5 H3 Z" fill="#00ee00"/><path d="M8.5 2V8.5" stroke="#000" stroke-width="1"/></svg><svg style="left:126px;top:72px" width="16" height="16" shape-rendering="crispEdges"><rect width="16" height="16" fill="#ff0"/><path d="M0 4h2v-3h4v3h3v-3h4v3h3" fill="none" stroke="#f00" stroke-width="1" transform="translate(0.5,0.5)"/><path d="M0 9h2v-3h4v3h3v-3h4v3h3" fill="none" stroke="#00e000" stroke-width="1" transform="translate(0.5,0.5)"/><path d="M0 15 L3 11 L6 15 L9 11 L12 15 L15 11" fill="none" stroke="#0000ff" stroke-width="1.1" shape-rendering="auto"/></svg><svg style="left:148px;top:72px" width="16" height="16"><rect width="16" height="16" fill="#00ffff"/><ellipse cx="4.5" cy="1.8" rx="2.8" ry="1.2" fill="none" stroke="#0000ff" stroke-width="1"/><path d="M10 1.8L11.5 0.5V3ZM14 1.8L12.5 0.5V3Z" fill="#0000ff"/><path d="M0 10.5H16" stroke="#0000ff" stroke-width="1"/><circle cx="3.5" cy="13.5" r="1.6" fill="none" stroke="#0000ff" stroke-width="1"/><circle cx="7.5" cy="13.5" r="1.6" fill="none" stroke="#0000ff" stroke-width="1"/><circle cx="11.5" cy="13.5" r="1.6" fill="none" stroke="#0000ff" stroke-width="1"/><g fill="#000" shape-rendering="crispEdges"><path d="M1 4h3v1h-3zM1 9h3v1h-3zM1 4h1v6h-1zM4 5h1v4h-1z"/><path d="M6 4h1v5h-1zM9 4h1v5h-1zM7 9h2v1h-2z"/><path d="M11 4h5v1h-5zM13 5h1v5h-1z"/></g></svg><svg style="left:171px;top:72px" width="16" height="16"><rect width="16" height="16" fill="#fff"/><path d="M0 3 L1.5 1.5 L3 3 L4.5 1.5 L6 3 L7.5 1.5 L9 3 L10.5 1.5" fill="none" stroke="#f00" stroke-width="1"/><path d="M10 1H16L13 4Z" fill="#f00"/><path d="M0 8 L1.5 6.5 L3 8 L4.5 6.5 L6 8 L7.5 6.5 L9 8 L10.5 6.5" fill="none" stroke="#00e000" stroke-width="1"/><path d="M10 6H16L13 9Z" fill="#00e000"/><path d="M0 14 L1.5 12.5 L3 14 L4.5 12.5 L6 14 L7.5 12.5 L9 14 L10.5 12.5" fill="none" stroke="#0000ff" stroke-width="1"/><path d="M10 12H16L13 15Z" fill="#0000ff"/></svg><svg style="left:194px;top:72px" width="16" height="16"><rect width="16" height="16" fill="#fff"/><path d="M1 1h3v1h-3zM1 7h3v1h-3zM1 1h1v7h-1zM4 2h1v5h-1z" fill="#0000ff" shape-rendering="crispEdges"/><path d="M6 1h3v1h-3zM6 7h3v1h-3zM6 1h1v7h-1zM9 2h1v5h-1z" fill="#ff0000" shape-rendering="crispEdges"/><path d="M11 1h3v1h-3zM11 4h3v1h-3zM11 1h1v7h-1zM14 2h1v2h-1z" fill="#00e000" shape-rendering="crispEdges"/><circle cx="7.5" cy="11.5" r="2.8" fill="none" stroke="#000" stroke-width="1.2"/><path d="M6 11.5H9M7.5 10V13M9.5 13.5L11.5 15.5" stroke="#000" stroke-width="1.1"/></svg><svg style="left:217px;top:72px" width="16" height="16"><rect width="16" height="16" fill="#fff"/><path d="M1 1h3v1h-3zM1 7h3v1h-3zM1 1h1v7h-1zM4 2h1v5h-1z" fill="#0000ff" shape-rendering="crispEdges"/><path d="M6 1h3v1h-3zM6 7h3v1h-3zM6 1h1v7h-1zM9 2h1v5h-1z" fill="#ff0000" shape-rendering="crispEdges"/><path d="M12 1h3v1h-3zM12 7h3v1h-3zM11 2h1v5h-1z" fill="#00e000" shape-rendering="crispEdges"/><path d="M1.5 10V14.5H15" fill="none" stroke="#000" stroke-width="1.2"/><path d="M0 10.5L1.5 9L3 10.5ZM14 13L16 14.5L14 16Z" fill="#000"/><path d="M2 10.5H13.5L15 12" fill="none" stroke="#f00" stroke-width="1"/></svg><div style="left:239px;top:72px;width:2px;height:16px;background:#a0a0a0;border-right:1px solid #fff;"></div><svg style="left:247px;top:71px" width="16" height="17"><path d="M5 1H11M8 1V5" stroke="#0000ff" stroke-width="1.5"/><path d="M5 5 H11 L14 10 V14 H2 V10 Z" fill="#00ffff" stroke="#0000ff" stroke-width="1"/><ellipse cx="8" cy="14" rx="5" ry="2" fill="#fff" stroke="#0000ff" stroke-width="1"/></svg><svg style="left:269px;top:72px" width="17" height="16"><path d="M3 1V8M0 8H6" stroke="#a0a0a0" stroke-width="1.3"/><text x="6" y="15.5" font-family="Liberation Sans" font-size="11.5" fill="#a0a0a0" stroke="#a0a0a0" stroke-width="0.4">A</text></svg><svg style="left:292px;top:72px" width="17" height="16"><path d="M3 1V8M0 8H6" stroke="#a0a0a0" stroke-width="1.3"/><text x="6" y="15.5" font-family="Liberation Sans" font-size="11.5" fill="#a0a0a0" stroke="#a0a0a0" stroke-width="0.4">B</text></svg><svg style="left:315px;top:72px" width="17" height="16"><circle cx="4" cy="4" r="3.5" fill="#20d0f0"/><path d="M5 6 L14 15 M10 10 L6 15" stroke="#0030c0" stroke-width="1.4"/><circle cx="5" cy="14" r="1.5" fill="#0030c0"/></svg><svg style="left:338px;top:72px" width="17" height="16"><path d="M1 5H4L8 1V15L4 11H1Z" fill="#f0c000" stroke="#0030c0" stroke-width="1"/><path d="M10 4 Q13 8 10 12 M12 2 Q16 8 12 14" fill="none" stroke="#0030c0" stroke-width="1.2"/></svg><svg style="left:363px;top:73px" width="12" height="14"><path d="M0 0 L11 7 L0 14Z" fill="#00e000"/></svg><svg style="left:386px;top:73px" width="14" height="16"><path d="M0 0 L10 6 L0 12Z" fill="#00e000"/><ellipse cx="10" cy="12.5" rx="3.3" ry="2" fill="none" stroke="#00e000" stroke-width="1.3"/></svg>
<div style="left:404px;top:69px;width:103px;height:22px;background:#e6e6e6;box-shadow:inset 1px 1px 0 #a0a0a0, inset 2px 2px 0 #696969;"></div>
<div style="left:490px;top:71px;width:17px;height:20px;background:#f0f0f0;box-shadow:inset 1px 1px 0 #fff, inset -1px -1px 0 #696969, inset -2px -2px 0 #a0a0a0;"></div>
<svg style="left:494.5px;top:78.5px" width="7" height="4"><path d="M0 0H7L3.5 4Z" fill="#a0a0a0"/></svg>
<div class="t" style="left:408.00px;top:73.57px;font-size:13.5px;line-height:13.5px;font-weight:700;color:#8d8d8d;font-family:'Liberation Sans', sans-serif;">AC</div>
<div style="left:509px;top:69px;width:103px;height:22px;background:#e6e6e6;box-shadow:inset 1px 1px 0 #a0a0a0, inset 2px 2px 0 #696969;"></div>
<div style="left:595px;top:71px;width:17px;height:20px;background:#f0f0f0;box-shadow:inset 1px 1px 0 #fff, inset -1px -1px 0 #696969, inset -2px -2px 0 #a0a0a0;"></div>
<svg style="left:599.5px;top:78.5px" width="7" height="4"><path d="M0 0H7L3.5 4Z" fill="#a0a0a0"/></svg>
<div class="t" style="left:513.00px;top:73.57px;font-size:13.5px;line-height:13.5px;font-weight:700;color:#8d8d8d;font-family:'Liberation Sans', sans-serif;">AC</div>
<div style="left:614px;top:69px;width:209px;height:22px;background:#e6e6e6;box-shadow:inset 1px 1px 0 #a0a0a0, inset 2px 2px 0 #696969;"></div>
<div style="left:806px;top:71px;width:17px;height:20px;background:#f0f0f0;box-shadow:inset 1px 1px 0 #fff, inset -1px -1px 0 #696969, inset -2px -2px 0 #a0a0a0;"></div>
<svg style="left:810.5px;top:78.5px" width="7" height="4"><path d="M0 0H7L3.5 4Z" fill="#a0a0a0"/></svg>
<div class="t" style="left:618.00px;top:73.57px;font-size:13.5px;line-height:13.5px;font-weight:700;color:#8d8d8d;font-family:'Liberation Sans', sans-serif;">±1V</div>
<div style="left:825px;top:69px;width:209px;height:22px;background:#e6e6e6;box-shadow:inset 1px 1px 0 #a0a0a0, inset 2px 2px 0 #696969;"></div>
<div style="left:1017px;top:71px;width:17px;height:20px;background:#f0f0f0;box-shadow:inset 1px 1px 0 #fff, inset -1px -1px 0 #696969, inset -2px -2px 0 #a0a0a0;"></div>
<svg style="left:1021.5px;top:78.5px" width="7" height="4"><path d="M0 0H7L3.5 4Z" fill="#a0a0a0"/></svg>
<div class="t" style="left:829.00px;top:73.57px;font-size:13.5px;line-height:13.5px;font-weight:700;color:#8d8d8d;font-family:'Liberation Sans', sans-serif;">±1V</div>
<div class="t" style="left:1065.00px;top:73.90px;font-size:13.7px;line-height:13.7px;font-weight:700;color:#000;font-family:'Liberation Sans', sans-serif;transform:scaleX(0.9659);transform-origin:0 0;">Probe</div>
<div style="left:1132px;top:69px;width:119px;height:22px;background:#e6e6e6;box-shadow:inset 1px 1px 0 #a0a0a0, inset 2px 2px 0 #696969;"></div>
<div style="left:1234px;top:71px;width:17px;height:20px;background:#f0f0f0;box-shadow:inset 1px 1px 0 #fff, inset -1px -1px 0 #696969, inset -2px -2px 0 #a0a0a0;"></div>
<svg style="left:1238.5px;top:78.5px" width="7" height="4"><path d="M0 0H7L3.5 4Z" fill="#000"/></svg>
<div class="t" style="left:1136.00px;top:73.57px;font-size:13.5px;line-height:13.5px;font-weight:700;color:#000;font-family:'Liberation Sans', sans-serif;">x1</div>
<div style="left:1254px;top:69px;width:118px;height:22px;background:#e6e6e6;box-shadow:inset 1px 1px 0 #a0a0a0, inset 2px 2px 0 #696969;"></div>
<div style="left:1355px;top:71px;width:17px;height:20px;background:#f0f0f0;box-shadow:inset 1px 1px 0 #fff, inset -1px -1px 0 #696969, inset -2px -2px 0 #a0a0a0;"></div>
<svg style="left:1359.5px;top:78.5px" width="7" height="4"><path d="M0 0H7L3.5 4Z" fill="#a0a0a0"/></svg>
<div class="t" style="left:1258.00px;top:73.57px;font-size:13.5px;line-height:13.5px;font-weight:700;color:#8d8d8d;font-family:'Liberation Sans', sans-serif;">x1</div>
<div style="left:1373px;top:69px;width:546px;height:22px;background:#f0f0f0;"></div>
<div style="left:1374px;top:70px;width:544px;height:9px;background:#e6e6e6;box-shadow:inset 1px 1px 0 #a0a0a0;"></div>
<div style="left:1375px;top:71px;width:381px;height:8px;background:linear-gradient(90deg,#00ff00 0%,#20f000 25%,#5cd800 55%,#a8c800 85%,#c8b800 100%);"></div>
<div style="left:1374px;top:80px;width:544px;height:11px;background:#e6e6e6;box-shadow:inset 1px 1px 0 #a0a0a0, inset -1px -1px 0 #fff;"></div>
<div class="t" style="left:1612.00px;top:71.13px;font-size:7.4px;line-height:7.4px;font-weight:700;color:#000;font-family:'Liberation Sans', sans-serif;transform:scaleX(1.2716);transform-origin:0 0;">71%(-3.0&nbsp;dBFS)</div>
<div style="left:1678px;top:95px;width:242px;height:558px;background:#f0f0f0;border:1px solid #8a8a8a;border-right:none;"></div>
<div style="left:1679px;top:96px;width:241px;height:25px;background:#fff;"></div>
<svg style="left:1682px;top:100px" width="16" height="16"><rect width="16" height="16" fill="#ff0"/><path d="M0 4 H3 V1 H7 V4 H10 V1 H14 V4 H16" fill="none" stroke="#f00" stroke-width="1.2"/><path d="M0 9 H3 V6 H7 V9 H10 V6 H14 V9 H16" fill="none" stroke="#0c0" stroke-width="1.2"/><path d="M0 15 L3 11 L6 15 L9 11 L12 15 L15 11" fill="none" stroke="#00f" stroke-width="1.2"/></svg>
<div class="t" style="left:1703.00px;top:102.34px;font-size:12px;line-height:12px;font-weight:400;color:#a0a0a0;font-family:'Liberation Sans', sans-serif;transform:scaleX(0.9322);transform-origin:0 0;">Signal&nbsp;Gener...</div>
<div style="left:1802px;top:108px;width:11px;height:1px;background:#8a8a8a;"></div>
<div style="left:1847px;top:103px;width:10px;height:10px;border:1px solid #d8d8d8;"></div>
<svg style="left:1892px;top:103px" width="12" height="12"><path d="M0.5 0.5L10.5 10.5M10.5 0.5L0.5 10.5" stroke="#8a8a8a" stroke-width="1.1"/></svg>
<div style="left:1684px;top:129px;width:13px;height:13px;background:#fff;box-shadow:inset 1px 1px 0 #a0a0a0, inset 2px 2px 0 #696969, inset -1px -1px 0 #fff, inset -2px -2px 0 #e3e3e3;"></div>
<svg style="left:1686px;top:131px" width="9" height="9"><path d="M1 4 L3.5 6.5 L8 1.5" fill="none" stroke="#000" stroke-width="1.8"/></svg>
<div class="t" style="left:1702.00px;top:130.26px;font-size:11.5px;line-height:11.5px;font-weight:400;color:#000;font-family:'Liberation Sans', sans-serif;transform:scaleX(0.9355);transform-origin:0 0;">Show&nbsp;Editor</div>
<div style="left:1765px;top:127px;width:126px;height:19px;background:#fff;box-shadow:inset 1px 1px 0 #a0a0a0, inset 2px 2px 0 #696969;"></div>
<div style="left:1876px;top:129px;width:15px;height:17px;background:#f0f0f0;box-shadow:inset 1px 1px 0 #fff, inset -1px -1px 0 #696969, inset -2px -2px 0 #a0a0a0;"></div>
<svg style="left:1879.5px;top:135.0px" width="7" height="4"><path d="M0 0H7L3.5 4Z" fill="#000"/></svg>
<div class="t" style="left:1769.00px;top:131.26px;font-size:11.5px;line-height:11.5px;font-weight:400;color:#000;font-family:'Liberation Sans', sans-serif;">No&nbsp;Loopback</div>
<div style="left:1894px;top:124px;width:24px;height:23px;background:#f0f0f0;box-shadow:inset 1px 1px 0 #e3e3e3, inset 2px 2px 0 #fff, inset -1px -1px 0 #696969, inset -2px -2px 0 #a0a0a0;"></div>
<div style="left:1901px;top:130px;width:12px;height:12px;background:#00e000;"></div>
<div class="t" style="left:1682.00px;top:156.26px;font-size:11.5px;line-height:11.5px;font-weight:400;color:#a3a3a3;font-family:'Liberation Sans', sans-serif;transform:scaleX(0.9137);transform-origin:0 0;">Start&nbsp;OSC&nbsp;after&nbsp;(s)</div>
<div style="left:1774px;top:152px;width:67px;height:19px;background:#f0f0f0;box-shadow:inset 1px 1px 0 #a0a0a0, inset 2px 2px 0 #696969, inset -1px -1px 0 #fff, inset -2px -2px 0 #e3e3e3;"></div>
<div class="t" style="left:1777.00px;top:156.26px;font-size:11.5px;line-height:11.5px;font-weight:400;color:#a3a3a3;font-family:'Liberation Sans', sans-serif;">0</div>
<div style="left:1844px;top:155px;width:13px;height:13px;background:#f0f0f0;box-shadow:inset 1px 1px 0 #a0a0a0, inset 2px 2px 0 #a0a0a0, inset -1px -1px 0 #fff, inset -2px -2px 0 #e3e3e3;"></div>
<div class="t" style="left:1862.00px;top:156.26px;font-size:11.5px;line-height:11.5px;font-weight:400;color:#a3a3a3;font-family:'Liberation Sans', sans-serif;transform:scaleX(0.9425);transform-origin:0 0;">Echo&nbsp;Only</div>
<div style="left:1681px;top:185px;width:209px;height:36px;border:1px solid #d5dfe5;box-shadow:inset 1px 1px 0 #fff;border-color:#a0a0a0 #fff #fff #a0a0a0;outline:1px solid transparent;"></div>
<div style="left:1681px;top:185px;width:209px;height:36px;border:1px solid #a7a7a7;"></div>
<div style="left:1688px;top:182px;width:103px;height:7px;background:#f0f0f0;"></div>
<div class="t" style="left:1690.00px;top:181.26px;font-size:11.5px;line-height:11.5px;font-weight:400;color:#000;font-family:'Liberation Sans', sans-serif;transform:scaleX(0.8953);transform-origin:0 0;">Sampling&nbsp;Parameters</div>
<div style="left:1687px;top:195px;width:99px;height:19px;background:#fff;box-shadow:inset 1px 1px 0 #a0a0a0, inset 2px 2px 0 #696969;"></div>
<div style="left:1771px;top:197px;width:15px;height:17px;background:#f0f0f0;box-shadow:inset 1px 1px 0 #fff, inset -1px -1px 0 #696969, inset -2px -2px 0 #a0a0a0;"></div>
<svg style="left:1774.5px;top:203.0px" width="7" height="4"><path d="M0 0H7L3.5 4Z" fill="#000"/></svg>
<div class="t" style="left:1691.00px;top:199.26px;font-size:11.5px;line-height:11.5px;font-weight:400;color:#000;font-family:'Liberation Sans', sans-serif;">48kHz</div>
<div style="left:1789px;top:195px;width:43px;height:19px;background:#fff;box-shadow:inset 1px 1px 0 #a0a0a0, inset 2px 2px 0 #696969;"></div>
<div style="left:1817px;top:197px;width:15px;height:17px;background:#f0f0f0;box-shadow:inset 1px 1px 0 #fff, inset -1px -1px 0 #696969, inset -2px -2px 0 #a0a0a0;"></div>
<svg style="left:1820.5px;top:203.0px" width="7" height="4"><path d="M0 0H7L3.5 4Z" fill="#000"/></svg>
<div class="t" style="left:1793.00px;top:199.26px;font-size:11.5px;line-height:11.5px;font-weight:400;color:#000;font-family:'Liberation Sans', sans-serif;">A&amp;B</div>
<div style="left:1835px;top:195px;width:51px;height:19px;background:#fff;box-shadow:inset 1px 1px 0 #a0a0a0, inset 2px 2px 0 #696969;"></div>
<div style="left:1871px;top:197px;width:15px;height:17px;background:#f0f0f0;box-shadow:inset 1px 1px 0 #fff, inset -1px -1px 0 #696969, inset -2px -2px 0 #a0a0a0;"></div>
<svg style="left:1874.5px;top:203.0px" width="7" height="4"><path d="M0 0H7L3.5 4Z" fill="#000"/></svg>
<div class="t" style="left:1839.00px;top:199.26px;font-size:11.5px;line-height:11.5px;font-weight:400;color:#000;font-family:'Liberation Sans', sans-serif;">24Bit</div>
<div style="left:1894px;top:179px;width:24px;height:22px;background:#f0f0f0;box-shadow:inset 1px 1px 0 #e3e3e3, inset 2px 2px 0 #fff, inset -1px -1px 0 #696969, inset -2px -2px 0 #a0a0a0;"></div>
<svg style="left:1898px;top:182px" width="16" height="16"><rect x="1" y="1" width="14" height="14" fill="#a0a050"/><rect x="4" y="2" width="8" height="5" fill="#e8e8c8"/><rect x="4" y="10" width="8" height="5" fill="#606060"/></svg>
<div style="left:1894px;top:202px;width:24px;height:22px;background:#f0f0f0;box-shadow:inset 1px 1px 0 #e3e3e3, inset 2px 2px 0 #fff, inset -1px -1px 0 #696969, inset -2px -2px 0 #a0a0a0;"></div>
<svg style="left:1898px;top:205px" width="16" height="16"><path d="M1 5H15M1 8H15M1 11H15M1 14H15" stroke="#e0a0a0" stroke-width="0.8"/><path d="M6 14 V3 L14 1 V12" fill="none" stroke="#e04040" stroke-width="1.4"/><circle cx="4.5" cy="14" r="1.8" fill="#e04040"/><circle cx="12.5" cy="12" r="1.8" fill="#e04040"/></svg>
<div style="left:1690px;top:232px;width:85px;height:20px;background:#fff;box-shadow:inset 1px 1px 0 #a0a0a0, inset 2px 2px 0 #696969;"></div>
<div style="left:1760px;top:234px;width:15px;height:18px;background:#f0f0f0;box-shadow:inset 1px 1px 0 #fff, inset -1px -1px 0 #696969, inset -2px -2px 0 #a0a0a0;"></div>
<svg style="left:1763.5px;top:240.5px" width="7" height="4"><path d="M0 0H7L3.5 4Z" fill="#000"/></svg>
<div class="t" style="left:1694.00px;top:237.26px;font-size:11.5px;line-height:11.5px;font-weight:400;color:#000;font-family:'Liberation Sans', sans-serif;">WFLibrary</div>
<div style="left:1787px;top:232px;width:23px;height:21px;background:#f0f0f0;box-shadow:inset 1px 1px 0 #e3e3e3, inset 2px 2px 0 #fff, inset -1px -1px 0 #696969, inset -2px -2px 0 #a0a0a0;"></div>
<div class="t" style="left:1793.71px;top:236.90px;font-size:11.5px;line-height:11.5px;font-weight:400;color:#000;font-family:'Liberation Sans', sans-serif;">...</div>
<div style="left:1823px;top:232px;width:85px;height:20px;background:#fff;box-shadow:inset 1px 1px 0 #a0a0a0, inset 2px 2px 0 #696969;"></div>
<div style="left:1893px;top:234px;width:15px;height:18px;background:#f0f0f0;box-shadow:inset 1px 1px 0 #fff, inset -1px -1px 0 #696969, inset -2px -2px 0 #a0a0a0;"></div>
<svg style="left:1896.5px;top:240.5px" width="7" height="4"><path d="M0 0H7L3.5 4Z" fill="#000"/></svg>
<div class="t" style="left:1827.00px;top:237.26px;font-size:11.5px;line-height:11.5px;font-weight:400;color:#000;font-family:'Liberation Sans', sans-serif;">WFLibrary</div>
<div class="t" style="left:1690.00px;top:261.76px;font-size:11.5px;line-height:11.5px;font-weight:400;color:#000;font-family:'Liberation Sans', sans-serif;transform:scaleX(0.9638);transform-origin:0 0;">C:\VIRTINS&nbsp;Multi-Instrument&nbsp;3.9\wf\J-Test_24</div>
<div class="t" style="left:1745.50px;top:288.76px;font-size:11.5px;line-height:11.5px;font-weight:400;color:#a3a3a3;font-family:'Liberation Sans', sans-serif;transform:scaleX(0.9149);transform-origin:0 0;">Output&nbsp;Frequency&nbsp;(Hz)</div>
<div style="left:1714px;top:307px;width:87px;height:19px;background:#f0f0f0;box-shadow:inset 1px 1px 0 #a0a0a0, inset 2px 2px 0 #696969;"></div>
<div style="left:1786px;top:309px;width:15px;height:17px;background:#f0f0f0;box-shadow:inset 1px 1px 0 #fff, inset -1px -1px 0 #696969, inset -2px -2px 0 #a0a0a0;"></div>
<svg style="left:1789.5px;top:315.0px" width="7" height="4"><path d="M0 0H7L3.5 4Z" fill="#a0a0a0"/></svg>
<div class="t" style="left:1716.00px;top:311.26px;font-size:11.5px;line-height:11.5px;font-weight:400;color:#8d8d8d;font-family:'Liberation Sans', sans-serif;">1000.488281</div>
<div style="left:1802px;top:307px;width:88px;height:19px;background:#f0f0f0;box-shadow:inset 1px 1px 0 #a0a0a0, inset 2px 2px 0 #696969;"></div>
<div style="left:1875px;top:309px;width:15px;height:17px;background:#f0f0f0;box-shadow:inset 1px 1px 0 #fff, inset -1px -1px 0 #696969, inset -2px -2px 0 #a0a0a0;"></div>
<svg style="left:1878.5px;top:315.0px" width="7" height="4"><path d="M0 0H7L3.5 4Z" fill="#a0a0a0"/></svg>
<div class="t" style="left:1804.00px;top:311.26px;font-size:11.5px;line-height:11.5px;font-weight:400;color:#8d8d8d;font-family:'Liberation Sans', sans-serif;">1000.488281</div>
<div class="t" style="left:1749.00px;top:337.76px;font-size:11.5px;line-height:11.5px;font-weight:400;color:#a3a3a3;font-family:'Liberation Sans', sans-serif;transform:scaleX(0.9096);transform-origin:0 0;">Output&nbsp;Amplitude(Vp)</div>
<div style="left:1714px;top:359px;width:87px;height:19px;background:#f0f0f0;box-shadow:inset 1px 1px 0 #a0a0a0, inset 2px 2px 0 #696969;"></div>
<div style="left:1786px;top:361px;width:15px;height:17px;background:#f0f0f0;box-shadow:inset 1px 1px 0 #fff, inset -1px -1px 0 #696969, inset -2px -2px 0 #a0a0a0;"></div>
<svg style="left:1789.5px;top:367.0px" width="7" height="4"><path d="M0 0H7L3.5 4Z" fill="#a0a0a0"/></svg>
<div class="t" style="left:1716.00px;top:363.26px;font-size:11.5px;line-height:11.5px;font-weight:400;color:#8d8d8d;font-family:'Liberation Sans', sans-serif;">0.6</div>
<div style="left:1802px;top:359px;width:88px;height:19px;background:#f0f0f0;box-shadow:inset 1px 1px 0 #a0a0a0, inset 2px 2px 0 #696969;"></div>
<div style="left:1875px;top:361px;width:15px;height:17px;background:#f0f0f0;box-shadow:inset 1px 1px 0 #fff, inset -1px -1px 0 #696969, inset -2px -2px 0 #a0a0a0;"></div>
<svg style="left:1878.5px;top:367.0px" width="7" height="4"><path d="M0 0H7L3.5 4Z" fill="#a0a0a0"/></svg>
<div class="t" style="left:1804.00px;top:363.26px;font-size:11.5px;line-height:11.5px;font-weight:400;color:#8d8d8d;font-family:'Liberation Sans', sans-serif;">0.6</div>
<div class="t" style="left:1718.50px;top:389.76px;font-size:11.5px;line-height:11.5px;font-weight:400;color:#a3a3a3;font-family:'Liberation Sans', sans-serif;transform:scaleX(0.9237);transform-origin:0 0;">Output&nbsp;Phase&nbsp;Difference&nbsp;(Degree)</div>
<div style="left:1762px;top:410px;width:74px;height:19px;background:#f0f0f0;box-shadow:inset 1px 1px 0 #a0a0a0, inset 2px 2px 0 #696969;"></div>
<div style="left:1821px;top:412px;width:15px;height:17px;background:#f0f0f0;box-shadow:inset 1px 1px 0 #fff, inset -1px -1px 0 #696969, inset -2px -2px 0 #a0a0a0;"></div>
<svg style="left:1824.5px;top:418.0px" width="7" height="4"><path d="M0 0H7L3.5 4Z" fill="#a0a0a0"/></svg>
<div class="t" style="left:1764.00px;top:414.26px;font-size:11.5px;line-height:11.5px;font-weight:400;color:#8d8d8d;font-family:'Liberation Sans', sans-serif;">0</div>
<div style="left:1687px;top:295px;width:3px;height:134px;background:#a0a0a0;box-shadow:inset -1px -1px 0 #fff;"></div>
<div style="left:1683px;top:419px;width:11px;height:5px;background:#f0f0f0;box-shadow:inset 1px 1px 0 #fff, inset -1px -1px 0 #696969;"></div>
<div style="left:1702px;top:295px;width:3px;height:134px;background:#a0a0a0;box-shadow:inset -1px -1px 0 #fff;"></div>
<div style="left:1698px;top:347px;width:11px;height:5px;background:#f0f0f0;box-shadow:inset 1px 1px 0 #fff, inset -1px -1px 0 #696969;"></div>
<div style="left:1896px;top:295px;width:3px;height:134px;background:#a0a0a0;box-shadow:inset -1px -1px 0 #fff;"></div>
<div style="left:1892px;top:347px;width:11px;height:5px;background:#f0f0f0;box-shadow:inset 1px 1px 0 #fff, inset -1px -1px 0 #696969;"></div>
<div style="left:1909px;top:295px;width:3px;height:134px;background:#a0a0a0;box-shadow:inset -1px -1px 0 #fff;"></div>
<div style="left:1905px;top:419px;width:11px;height:5px;background:#f0f0f0;box-shadow:inset 1px 1px 0 #fff, inset -1px -1px 0 #696969;"></div>
<div class="t" style="left:1683.00px;top:434.26px;font-size:11.5px;line-height:11.5px;font-weight:400;color:#a3a3a3;font-family:'Liberation Sans', sans-serif;transform:scaleX(0.8646);transform-origin:0 0;">-4.4dBFS</div>
<div class="t" style="left:1872.00px;top:434.26px;font-size:11.5px;line-height:11.5px;font-weight:400;color:#a3a3a3;font-family:'Liberation Sans', sans-serif;transform:scaleX(0.8646);transform-origin:0 0;">-4.4dBFS</div>
<div style="left:1737px;top:438px;width:121px;height:3px;background:#a0a0a0;box-shadow:inset -1px -1px 0 #fff;"></div>
<div style="left:1797px;top:434px;width:4px;height:12px;background:#f0f0f0;box-shadow:inset 1px 1px 0 #fff, inset -1px -1px 0 #696969;"></div>
<div style="left:1681px;top:453px;width:238px;height:46px;border:1px solid #d5dfe5;box-shadow:inset 1px 1px 0 #fff;border-color:#a0a0a0 #fff #fff #a0a0a0;outline:1px solid transparent;"></div>
<div style="left:1681px;top:453px;width:238px;height:46px;border:1px solid #a7a7a7;"></div>
<div style="left:1688px;top:459px;width:13px;height:13px;background:#f0f0f0;box-shadow:inset 1px 1px 0 #a0a0a0, inset 2px 2px 0 #a0a0a0, inset -1px -1px 0 #fff, inset -2px -2px 0 #e3e3e3;"></div>
<div class="t" style="left:1706.00px;top:459.26px;font-size:11.5px;line-height:11.5px;font-weight:400;color:#a3a3a3;font-family:'Liberation Sans', sans-serif;transform:scaleX(0.9463);transform-origin:0 0;">Mask</div>
<div style="left:1751px;top:457px;width:15px;height:15px;background:#f0f0f0;box-shadow:inset 1px 1px 0 #e3e3e3, inset 2px 2px 0 #fff, inset -1px -1px 0 #696969, inset -2px -2px 0 #a0a0a0;"></div>
<div class="t" style="left:1754.33px;top:459.63px;font-size:10px;line-height:10px;font-weight:400;color:#a3a3a3;font-family:'Liberation Sans', sans-serif;">...</div>
<div class="t" style="left:1785.00px;top:460.26px;font-size:11.5px;line-height:11.5px;font-weight:400;color:#a3a3a3;font-family:'Liberation Sans', sans-serif;">On&nbsp;(s)</div>
<div class="t" style="left:1860.00px;top:460.26px;font-size:11.5px;line-height:11.5px;font-weight:400;color:#a3a3a3;font-family:'Liberation Sans', sans-serif;transform:scaleX(1.0084);transform-origin:0 0;">Off&nbsp;(s)</div>
<div style="left:1688px;top:479px;width:13px;height:13px;background:#f0f0f0;box-shadow:inset 1px 1px 0 #a0a0a0, inset 2px 2px 0 #a0a0a0, inset -1px -1px 0 #fff, inset -2px -2px 0 #e3e3e3;"></div>
<svg style="left:1690px;top:481px" width="9" height="9"><path d="M1 4 L3.5 6.5 L8 1.5" fill="none" stroke="#a0a0a0" stroke-width="1.8"/></svg>
<div class="t" style="left:1706.00px;top:479.26px;font-size:11.5px;line-height:11.5px;font-weight:400;color:#a3a3a3;font-family:'Liberation Sans', sans-serif;transform:scaleX(0.9319);transform-origin:0 0;">Phase&nbsp;Lock</div>
<div style="left:1774px;top:476px;width:66px;height:19px;background:#f0f0f0;box-shadow:inset 1px 1px 0 #a0a0a0, inset 2px 2px 0 #696969, inset -1px -1px 0 #fff, inset -2px -2px 0 #e3e3e3;"></div>
<div class="t" style="left:1776.00px;top:480.26px;font-size:11.5px;line-height:11.5px;font-weight:400;color:#a3a3a3;font-family:'Liberation Sans', sans-serif;">1</div>
<div style="left:1847px;top:476px;width:66px;height:19px;background:#f0f0f0;box-shadow:inset 1px 1px 0 #a0a0a0, inset 2px 2px 0 #696969, inset -1px -1px 0 #fff, inset -2px -2px 0 #e3e3e3;"></div>
<div class="t" style="left:1849.00px;top:480.26px;font-size:11.5px;line-height:11.5px;font-weight:400;color:#a3a3a3;font-family:'Liberation Sans', sans-serif;">0</div>
<div style="left:1681px;top:504px;width:238px;height:45px;border:1px solid #d5dfe5;box-shadow:inset 1px 1px 0 #fff;border-color:#a0a0a0 #fff #fff #a0a0a0;outline:1px solid transparent;"></div>
<div style="left:1681px;top:504px;width:238px;height:45px;border:1px solid #a7a7a7;"></div>
<div style="left:1688px;top:519px;width:13px;height:13px;background:#f0f0f0;box-shadow:inset 1px 1px 0 #a0a0a0, inset 2px 2px 0 #a0a0a0, inset -1px -1px 0 #fff, inset -2px -2px 0 #e3e3e3;"></div>
<div class="t" style="left:1706.00px;top:520.26px;font-size:11.5px;line-height:11.5px;font-weight:400;color:#a3a3a3;font-family:'Liberation Sans', sans-serif;transform:scaleX(0.9156);transform-origin:0 0;">Fade</div>
<div class="t" style="left:1787.50px;top:510.26px;font-size:11.5px;line-height:11.5px;font-weight:400;color:#a3a3a3;font-family:'Liberation Sans', sans-serif;transform:scaleX(0.8780);transform-origin:0 0;">In&nbsp;(s)</div>
<div class="t" style="left:1862.00px;top:510.26px;font-size:11.5px;line-height:11.5px;font-weight:400;color:#a3a3a3;font-family:'Liberation Sans', sans-serif;transform:scaleX(0.9106);transform-origin:0 0;">Out&nbsp;(s)</div>
<div style="left:1774px;top:527px;width:66px;height:19px;background:#f0f0f0;box-shadow:inset 1px 1px 0 #a0a0a0, inset 2px 2px 0 #696969, inset -1px -1px 0 #fff, inset -2px -2px 0 #e3e3e3;"></div>
<div class="t" style="left:1776.00px;top:531.26px;font-size:11.5px;line-height:11.5px;font-weight:400;color:#a3a3a3;font-family:'Liberation Sans', sans-serif;">0.01</div>
<div style="left:1847px;top:527px;width:66px;height:19px;background:#f0f0f0;box-shadow:inset 1px 1px 0 #a0a0a0, inset 2px 2px 0 #696969, inset -1px -1px 0 #fff, inset -2px -2px 0 #e3e3e3;"></div>
<div class="t" style="left:1849.00px;top:531.26px;font-size:11.5px;line-height:11.5px;font-weight:400;color:#a3a3a3;font-family:'Liberation Sans', sans-serif;">0.01</div>
<div style="left:1681px;top:554px;width:238px;height:47px;border:1px solid #d5dfe5;box-shadow:inset 1px 1px 0 #fff;border-color:#a0a0a0 #fff #fff #a0a0a0;outline:1px solid transparent;"></div>
<div style="left:1681px;top:554px;width:238px;height:47px;border:1px solid #a7a7a7;"></div>
<div class="t" style="left:1684.00px;top:559.26px;font-size:11.5px;line-height:11.5px;font-weight:400;color:#000;font-family:'Liberation Sans', sans-serif;transform:scaleX(0.9243);transform-origin:0 0;">Modulation</div>
<div class="t" style="left:1757.00px;top:559.26px;font-size:11.5px;line-height:11.5px;font-weight:400;color:#a3a3a3;font-family:'Liberation Sans', sans-serif;transform:scaleX(0.8660);transform-origin:0 0;">Carrier&nbsp;(Hz)</div>
<div class="t" style="left:1832.00px;top:559.26px;font-size:11.5px;line-height:11.5px;font-weight:400;color:#a3a3a3;font-family:'Liberation Sans', sans-serif;transform:scaleX(0.8336);transform-origin:0 0;">Mod.&nbsp;Index&nbsp;(%)</div>
<div style="left:1684px;top:577px;width:58px;height:19px;background:#fff;box-shadow:inset 1px 1px 0 #a0a0a0, inset 2px 2px 0 #696969;"></div>
<div style="left:1727px;top:579px;width:15px;height:17px;background:#f0f0f0;box-shadow:inset 1px 1px 0 #fff, inset -1px -1px 0 #696969, inset -2px -2px 0 #a0a0a0;"></div>
<svg style="left:1730.5px;top:585.0px" width="7" height="4"><path d="M0 0H7L3.5 4Z" fill="#000"/></svg>
<div class="t" style="left:1687.00px;top:581.26px;font-size:11.5px;line-height:11.5px;font-weight:400;color:#000;font-family:'Liberation Sans', sans-serif;">NIL</div>
<div style="left:1757px;top:577px;width:65px;height:19px;background:#f0f0f0;box-shadow:inset 1px 1px 0 #a0a0a0, inset 2px 2px 0 #696969, inset -1px -1px 0 #fff, inset -2px -2px 0 #e3e3e3;"></div>
<div class="t" style="left:1759.00px;top:581.26px;font-size:11.5px;line-height:11.5px;font-weight:400;color:#a3a3a3;font-family:'Liberation Sans', sans-serif;">0</div>
<div style="left:1838px;top:577px;width:65px;height:19px;background:#f0f0f0;box-shadow:inset 1px 1px 0 #a0a0a0, inset 2px 2px 0 #696969, inset -1px -1px 0 #fff, inset -2px -2px 0 #e3e3e3;"></div>
<div class="t" style="left:1840.00px;top:581.26px;font-size:11.5px;line-height:11.5px;font-weight:400;color:#a3a3a3;font-family:'Liberation Sans', sans-serif;">0</div>
<div class="t" style="left:1681.00px;top:611.26px;font-size:11.5px;line-height:11.5px;font-weight:400;color:#000;font-family:'Liberation Sans', sans-serif;transform:scaleX(0.9322);transform-origin:0 0;">Duration&nbsp;(s)</div>
<div style="left:1745px;top:608px;width:65px;height:19px;background:#f0f0f0;box-shadow:inset 1px 1px 0 #a0a0a0, inset 2px 2px 0 #696969, inset -1px -1px 0 #fff, inset -2px -2px 0 #e3e3e3;"></div>
<div class="t" style="left:1747.00px;top:612.26px;font-size:11.5px;line-height:11.5px;font-weight:400;color:#a3a3a3;font-family:'Liberation Sans', sans-serif;">1</div>
<div style="left:1817px;top:611px;width:13px;height:13px;background:#fff;box-shadow:inset 1px 1px 0 #a0a0a0, inset 2px 2px 0 #696969, inset -1px -1px 0 #fff, inset -2px -2px 0 #e3e3e3;"></div>
<svg style="left:1819px;top:613px" width="9" height="9"><path d="M1 4 L3.5 6.5 L8 1.5" fill="none" stroke="#000" stroke-width="1.8"/></svg>
<div class="t" style="left:1835.00px;top:612.26px;font-size:11.5px;line-height:11.5px;font-weight:400;color:#000;font-family:'Liberation Sans', sans-serif;transform:scaleX(0.9773);transform-origin:0 0;">Loop</div>
<div style="left:1873px;top:611px;width:13px;height:13px;background:#f0f0f0;box-shadow:inset 1px 1px 0 #a0a0a0, inset 2px 2px 0 #a0a0a0, inset -1px -1px 0 #fff, inset -2px -2px 0 #e3e3e3;"></div>
<div class="t" style="left:1891.00px;top:612.26px;font-size:11.5px;line-height:11.5px;font-weight:400;color:#a3a3a3;font-family:'Liberation Sans', sans-serif;transform:scaleX(0.9061);transform-origin:0 0;">DDS</div>
<div style="left:1682px;top:634px;width:13px;height:13px;background:#f0f0f0;box-shadow:inset 1px 1px 0 #a0a0a0, inset 2px 2px 0 #a0a0a0, inset -1px -1px 0 #fff, inset -2px -2px 0 #e3e3e3;"></div>
<div class="t" style="left:1699.00px;top:635.26px;font-size:11.5px;line-height:11.5px;font-weight:400;color:#a3a3a3;font-family:'Liberation Sans', sans-serif;transform:scaleX(0.9385);transform-origin:0 0;">Sweep</div>
<svg style="left:1757px;top:634px" width="12" height="12"><circle cx="6" cy="6" r="4.5" fill="#f0f0f0"/><path d="M10.2 2.2 A5.5 5.5 0 0 0 1.8 10.2" fill="none" stroke="#808080" stroke-width="1"/><path d="M1.8 10.2 A5.5 5.5 0 0 0 10.2 2.2" fill="none" stroke="#fff" stroke-width="1"/><path d="M9.2 3 A4.2 4.2 0 0 0 2.8 9.2" fill="none" stroke="#404040" stroke-width="1"/><circle cx="6" cy="6" r="1.8" fill="#a0a0a0"/></svg>
<div class="t" style="left:1775.00px;top:635.26px;font-size:11.5px;line-height:11.5px;font-weight:400;color:#a3a3a3;font-family:'Liberation Sans', sans-serif;transform:scaleX(0.9203);transform-origin:0 0;">Frequency</div>
<svg style="left:1838px;top:634px" width="12" height="12"><circle cx="6" cy="6" r="4.5" fill="#f0f0f0"/><path d="M10.2 2.2 A5.5 5.5 0 0 0 1.8 10.2" fill="none" stroke="#808080" stroke-width="1"/><path d="M1.8 10.2 A5.5 5.5 0 0 0 10.2 2.2" fill="none" stroke="#fff" stroke-width="1"/><path d="M9.2 3 A4.2 4.2 0 0 0 2.8 9.2" fill="none" stroke="#404040" stroke-width="1"/></svg>
<div class="t" style="left:1856.00px;top:635.26px;font-size:11.5px;line-height:11.5px;font-weight:400;color:#a3a3a3;font-family:'Liberation Sans', sans-serif;transform:scaleX(0.9778);transform-origin:0 0;">Amplitude</div>
<div style="left:0px;top:1055px;width:1920px;height:1px;background:#fff;"></div>
<div style="left:3px;top:1058px;width:1px;height:19px;background:#a0a0a0;"></div>
<div style="left:4px;top:1058px;width:1px;height:19px;background:#fff;"></div>
<div class="t" style="left:19.00px;top:1061.40px;font-size:13.7px;line-height:13.7px;font-weight:700;color:#000;font-family:'Liberation Sans', sans-serif;">F</div>
<div style="left:31px;top:1057px;width:150px;height:21px;background:#fff;box-shadow:inset 1px 1px 0 #a0a0a0, inset 2px 2px 0 #696969;"></div>
<div style="left:164px;top:1059px;width:17px;height:19px;background:#f0f0f0;box-shadow:inset 1px 1px 0 #fff, inset -1px -1px 0 #696969, inset -2px -2px 0 #a0a0a0;"></div>
<svg style="left:168.5px;top:1066.0px" width="7" height="4"><path d="M0 0H7L3.5 4Z" fill="#000"/></svg>
<div class="t" style="left:35.00px;top:1061.57px;font-size:13.5px;line-height:13.5px;font-weight:700;color:#000;font-family:'Liberation Sans', sans-serif;">Auto</div>
<div style="left:184px;top:1057px;width:117px;height:21px;background:#fff;box-shadow:inset 1px 1px 0 #a0a0a0, inset 2px 2px 0 #696969;"></div>
<div style="left:284px;top:1059px;width:17px;height:19px;background:#f0f0f0;box-shadow:inset 1px 1px 0 #fff, inset -1px -1px 0 #696969, inset -2px -2px 0 #a0a0a0;"></div>
<svg style="left:288.5px;top:1066.0px" width="7" height="4"><path d="M0 0H7L3.5 4Z" fill="#000"/></svg>
<div class="t" style="left:188.00px;top:1061.57px;font-size:13.5px;line-height:13.5px;font-weight:700;color:#000;font-family:'Liberation Sans', sans-serif;">x2</div>
<div class="t" style="left:310.00px;top:1061.40px;font-size:13.7px;line-height:13.7px;font-weight:700;color:#000;font-family:'Liberation Sans', sans-serif;">A</div>
<div style="left:1000px;top:1057px;width:98px;height:21px;background:#e6e6e6;box-shadow:inset 1px 1px 0 #a0a0a0, inset 2px 2px 0 #696969;"></div>
<div style="left:1081px;top:1059px;width:17px;height:19px;background:#f0f0f0;box-shadow:inset 1px 1px 0 #fff, inset -1px -1px 0 #696969, inset -2px -2px 0 #a0a0a0;"></div>
<svg style="left:1085.5px;top:1066.0px" width="7" height="4"><path d="M0 0H7L3.5 4Z" fill="#a0a0a0"/></svg>
<div style="left:1100px;top:1057px;width:109px;height:21px;background:#e6e6e6;box-shadow:inset 1px 1px 0 #a0a0a0, inset 2px 2px 0 #696969;"></div>
<div style="left:1192px;top:1059px;width:17px;height:19px;background:#f0f0f0;box-shadow:inset 1px 1px 0 #fff, inset -1px -1px 0 #696969, inset -2px -2px 0 #a0a0a0;"></div>
<svg style="left:1196.5px;top:1066.0px" width="7" height="4"><path d="M0 0H7L3.5 4Z" fill="#a0a0a0"/></svg>
<div class="t" style="left:1104.00px;top:1061.57px;font-size:13.5px;line-height:13.5px;font-weight:700;color:#8d8d8d;font-family:'Liberation Sans', sans-serif;">Off</div>
<div class="t" style="left:1221.00px;top:1061.90px;font-size:13.7px;line-height:13.7px;font-weight:700;color:#000;font-family:'Liberation Sans', sans-serif;transform:scaleX(0.9559);transform-origin:0 0;">FFT</div>
<div style="left:1256px;top:1057px;width:158px;height:21px;background:#fff;box-shadow:inset 1px 1px 0 #a0a0a0, inset 2px 2px 0 #696969;"></div>
<div style="left:1397px;top:1059px;width:17px;height:19px;background:#f0f0f0;box-shadow:inset 1px 1px 0 #fff, inset -1px -1px 0 #696969, inset -2px -2px 0 #a0a0a0;"></div>
<svg style="left:1401.5px;top:1066.0px" width="7" height="4"><path d="M0 0H7L3.5 4Z" fill="#000"/></svg>
<div class="t" style="left:1260.00px;top:1061.57px;font-size:13.5px;line-height:13.5px;font-weight:700;color:#000;font-family:'Liberation Sans', sans-serif;">65536</div>
<div class="t" style="left:1436.00px;top:1061.90px;font-size:13.7px;line-height:13.7px;font-weight:700;color:#000;font-family:'Liberation Sans', sans-serif;transform:scaleX(0.9780);transform-origin:0 0;">WND</div>
<div style="left:1488px;top:1057px;width:273px;height:21px;background:#fff;box-shadow:inset 1px 1px 0 #a0a0a0, inset 2px 2px 0 #696969;"></div>
<div style="left:1744px;top:1059px;width:17px;height:19px;background:#f0f0f0;box-shadow:inset 1px 1px 0 #fff, inset -1px -1px 0 #696969, inset -2px -2px 0 #a0a0a0;"></div>
<svg style="left:1748.5px;top:1066.0px" width="7" height="4"><path d="M0 0H7L3.5 4Z" fill="#000"/></svg>
<div class="t" style="left:1492.00px;top:1061.57px;font-size:13.5px;line-height:13.5px;font-weight:700;color:#000;font-family:'Liberation Sans', sans-serif;">Kaiser&nbsp;8</div>
<div style="left:1762px;top:1057px;width:154px;height:21px;background:#e6e6e6;box-shadow:inset 1px 1px 0 #a0a0a0, inset 2px 2px 0 #696969;"></div>
<div style="left:1899px;top:1059px;width:17px;height:19px;background:#f0f0f0;box-shadow:inset 1px 1px 0 #fff, inset -1px -1px 0 #696969, inset -2px -2px 0 #a0a0a0;"></div>
<svg style="left:1903.5px;top:1066.0px" width="7" height="4"><path d="M0 0H7L3.5 4Z" fill="#a0a0a0"/></svg>
<div class="t" style="left:1766.00px;top:1061.57px;font-size:13.5px;line-height:13.5px;font-weight:700;color:#8d8d8d;font-family:'Liberation Sans', sans-serif;">0%</div>
<div style="left:0px;top:1078px;width:1920px;height:2px;background:#3c3c3c;"></div>
<div style="left:327px;top:762px;width:705px;height:318px;background:#f0f0f0;border:1px solid #6f6f6f;border-bottom:none;"></div>
<div style="left:328px;top:763px;width:703px;height:24px;background:#fff;"></div>
<div class="t" style="left:332.00px;top:768.84px;font-size:12px;line-height:12px;font-weight:400;color:#000;font-family:'Liberation Sans', sans-serif;transform:scaleX(0.9638);transform-origin:0 0;">Spectrum&nbsp;Analyzer&nbsp;Properties</div>
<svg style="left:1011px;top:768px" width="12" height="12"><path d="M0.5 0.5L11.5 11.5M11.5 0.5L0.5 11.5" stroke="#000" stroke-width="1.1"/></svg>
<div style="left:340px;top:818px;width:682px;height:262px;background:#f0f0f0;border-left:1px solid #fff;border-top:1px solid #fff;border-right:1px solid #696969;box-shadow:inset -1px 0 0 #a0a0a0;"></div>
<div style="left:342px;top:801px;width:63px;height:17px;background:#f0f0f0;border-left:1px solid #fff;border-top:1px solid #fff;border-right:1px solid #696969;box-shadow:inset -1px 0 0 #a0a0a0;border-radius:0;"></div>
<div class="t" style="left:345.50px;top:804.26px;font-size:11.5px;line-height:11.5px;font-weight:400;color:#000;font-family:'Liberation Sans', sans-serif;transform:scaleX(0.9844);transform-origin:0 0;">Processing</div>
<div style="left:405px;top:801px;width:48px;height:17px;background:#f0f0f0;border-left:1px solid #fff;border-top:1px solid #fff;border-right:1px solid #696969;box-shadow:inset -1px 0 0 #a0a0a0;border-radius:0;"></div>
<div class="t" style="left:410.00px;top:804.26px;font-size:11.5px;line-height:11.5px;font-weight:400;color:#000;font-family:'Liberation Sans', sans-serif;transform:scaleX(0.9588);transform-origin:0 0;">X&nbsp;Scale</div>
<div style="left:504px;top:801px;width:74px;height:17px;background:#f0f0f0;border-left:1px solid #fff;border-top:1px solid #fff;border-right:1px solid #696969;box-shadow:inset -1px 0 0 #a0a0a0;border-radius:0;"></div>
<div class="t" style="left:508.00px;top:804.26px;font-size:11.5px;line-height:11.5px;font-weight:400;color:#000;font-family:'Liberation Sans', sans-serif;transform:scaleX(0.9303);transform-origin:0 0;">Chart&nbsp;Options</div>
<div style="left:578px;top:801px;width:64px;height:17px;background:#f0f0f0;border-left:1px solid #fff;border-top:1px solid #fff;border-right:1px solid #696969;box-shadow:inset -1px 0 0 #a0a0a0;border-radius:0;"></div>
<div class="t" style="left:585.00px;top:804.26px;font-size:11.5px;line-height:11.5px;font-weight:400;color:#000;font-family:'Liberation Sans', sans-serif;transform:scaleX(0.9424);transform-origin:0 0;">Reference</div>
<div style="left:453px;top:799px;width:52px;height:20px;background:#f0f0f0;border-left:1px solid #fff;border-top:1px solid #fff;border-right:1px solid #696969;box-shadow:inset -1px 0 0 #a0a0a0;border-radius:0;"></div>
<div class="t" style="left:460.00px;top:803.26px;font-size:11.5px;line-height:11.5px;font-weight:400;color:#000;font-family:'Liberation Sans', sans-serif;transform:scaleX(0.9639);transform-origin:0 0;">Y&nbsp;Scale</div>
<div style="left:354px;top:835px;width:593px;height:140px;border:1px solid #d5dfe5;box-shadow:inset 1px 1px 0 #fff;border-color:#a0a0a0 #fff #fff #a0a0a0;outline:1px solid transparent;"></div>
<div style="left:354px;top:835px;width:593px;height:140px;border:1px solid #a7a7a7;"></div>
<div style="left:361px;top:832px;width:41px;height:7px;background:#f0f0f0;"></div>
<div class="t" style="left:363.00px;top:830.26px;font-size:11.5px;line-height:11.5px;font-weight:400;color:#000;font-family:'Liberation Sans', sans-serif;transform:scaleX(0.9385);transform-origin:0 0;">Y&nbsp;Scale</div>
<div class="t" style="left:363.00px;top:852.46px;font-size:11.5px;line-height:11.5px;font-weight:400;color:#000;font-family:'Liberation Sans', sans-serif;transform:scaleX(0.9387);transform-origin:0 0;">Relative&nbsp;Mode</div>
<svg style="left:364px;top:870px" width="12" height="12"><circle cx="6" cy="6" r="4.5" fill="#fff"/><path d="M10.2 2.2 A5.5 5.5 0 0 0 1.8 10.2" fill="none" stroke="#808080" stroke-width="1"/><path d="M1.8 10.2 A5.5 5.5 0 0 0 10.2 2.2" fill="none" stroke="#fff" stroke-width="1"/><path d="M9.2 3 A4.2 4.2 0 0 0 2.8 9.2" fill="none" stroke="#404040" stroke-width="1"/></svg>
<div class="t" style="left:381.00px;top:870.96px;font-size:11.5px;line-height:11.5px;font-weight:400;color:#000;font-family:'Liberation Sans', sans-serif;transform:scaleX(0.9214);transform-origin:0 0;">Linear&nbsp;(Vr=Peak)</div>
<svg style="left:364px;top:891px" width="12" height="12"><circle cx="6" cy="6" r="4.5" fill="#fff"/><path d="M10.2 2.2 A5.5 5.5 0 0 0 1.8 10.2" fill="none" stroke="#808080" stroke-width="1"/><path d="M1.8 10.2 A5.5 5.5 0 0 0 10.2 2.2" fill="none" stroke="#fff" stroke-width="1"/><path d="M9.2 3 A4.2 4.2 0 0 0 2.8 9.2" fill="none" stroke="#404040" stroke-width="1"/><circle cx="6" cy="6" r="1.8" fill="#000"/></svg>
<div class="t" style="left:381.00px;top:891.96px;font-size:11.5px;line-height:11.5px;font-weight:400;color:#000;font-family:'Liberation Sans', sans-serif;transform:scaleX(0.9500);transform-origin:0 0;">dBr</div>
<svg style="left:376px;top:912px" width="12" height="12"><circle cx="6" cy="6" r="4.5" fill="#fff"/><path d="M10.2 2.2 A5.5 5.5 0 0 0 1.8 10.2" fill="none" stroke="#808080" stroke-width="1"/><path d="M1.8 10.2 A5.5 5.5 0 0 0 10.2 2.2" fill="none" stroke="#fff" stroke-width="1"/><path d="M9.2 3 A4.2 4.2 0 0 0 2.8 9.2" fill="none" stroke="#404040" stroke-width="1"/><circle cx="6" cy="6" r="1.8" fill="#000"/></svg>
<div class="t" style="left:393.00px;top:912.96px;font-size:11.5px;line-height:11.5px;font-weight:400;color:#000;font-family:'Liberation Sans', sans-serif;transform:scaleX(0.9318);transform-origin:0 0;">Vr=Peak</div>
<svg style="left:376px;top:934px" width="12" height="12"><circle cx="6" cy="6" r="4.5" fill="#fff"/><path d="M10.2 2.2 A5.5 5.5 0 0 0 1.8 10.2" fill="none" stroke="#808080" stroke-width="1"/><path d="M1.8 10.2 A5.5 5.5 0 0 0 10.2 2.2" fill="none" stroke="#fff" stroke-width="1"/><path d="M9.2 3 A4.2 4.2 0 0 0 2.8 9.2" fill="none" stroke="#404040" stroke-width="1"/></svg>
<div class="t" style="left:393.00px;top:935.96px;font-size:11.5px;line-height:11.5px;font-weight:400;color:#000;font-family:'Liberation Sans', sans-serif;transform:scaleX(0.9510);transform-origin:0 0;">Vr@Hz</div>
<div style="left:447px;top:929px;width:55px;height:22px;background:#f0f0f0;box-shadow:inset 1px 1px 0 #a0a0a0, inset 2px 2px 0 #696969, inset -1px -1px 0 #fff, inset -2px -2px 0 #e3e3e3;"></div>
<div class="t" style="left:450.00px;top:933.26px;font-size:11.5px;line-height:11.5px;font-weight:400;color:#8d8d8d;font-family:'Liberation Sans', sans-serif;">12000</div>
<div class="t" style="left:517.00px;top:852.46px;font-size:11.5px;line-height:11.5px;font-weight:400;color:#000;font-family:'Liberation Sans', sans-serif;transform:scaleX(0.9386);transform-origin:0 0;">Absolute&nbsp;Mode</div>
<svg style="left:518px;top:870px" width="12" height="12"><circle cx="6" cy="6" r="4.5" fill="#fff"/><path d="M10.2 2.2 A5.5 5.5 0 0 0 1.8 10.2" fill="none" stroke="#808080" stroke-width="1"/><path d="M1.8 10.2 A5.5 5.5 0 0 0 10.2 2.2" fill="none" stroke="#fff" stroke-width="1"/><path d="M9.2 3 A4.2 4.2 0 0 0 2.8 9.2" fill="none" stroke="#404040" stroke-width="1"/></svg>
<div class="t" style="left:536.00px;top:870.96px;font-size:11.5px;line-height:11.5px;font-weight:400;color:#000;font-family:'Liberation Sans', sans-serif;transform:scaleX(0.8711);transform-origin:0 0;">Vrms</div>
<svg style="left:518px;top:891px" width="12" height="12"><circle cx="6" cy="6" r="4.5" fill="#fff"/><path d="M10.2 2.2 A5.5 5.5 0 0 0 1.8 10.2" fill="none" stroke="#808080" stroke-width="1"/><path d="M1.8 10.2 A5.5 5.5 0 0 0 10.2 2.2" fill="none" stroke="#fff" stroke-width="1"/><path d="M9.2 3 A4.2 4.2 0 0 0 2.8 9.2" fill="none" stroke="#404040" stroke-width="1"/></svg>
<div class="t" style="left:536.00px;top:891.96px;font-size:11.5px;line-height:11.5px;font-weight:400;color:#000;font-family:'Liberation Sans', sans-serif;transform:scaleX(0.8915);transform-origin:0 0;">dBV&nbsp;(Vr=1&nbsp;Vrms)</div>
<svg style="left:518px;top:912px" width="12" height="12"><circle cx="6" cy="6" r="4.5" fill="#fff"/><path d="M10.2 2.2 A5.5 5.5 0 0 0 1.8 10.2" fill="none" stroke="#808080" stroke-width="1"/><path d="M1.8 10.2 A5.5 5.5 0 0 0 10.2 2.2" fill="none" stroke="#fff" stroke-width="1"/><path d="M9.2 3 A4.2 4.2 0 0 0 2.8 9.2" fill="none" stroke="#404040" stroke-width="1"/></svg>
<div class="t" style="left:536.00px;top:912.96px;font-size:11.5px;line-height:11.5px;font-weight:400;color:#000;font-family:'Liberation Sans', sans-serif;transform:scaleX(0.9025);transform-origin:0 0;">dBu&nbsp;(Vr=0.775&nbsp;Vrms)</div>
<svg style="left:518px;top:934px" width="12" height="12"><circle cx="6" cy="6" r="4.5" fill="#fff"/><path d="M10.2 2.2 A5.5 5.5 0 0 0 1.8 10.2" fill="none" stroke="#808080" stroke-width="1"/><path d="M1.8 10.2 A5.5 5.5 0 0 0 10.2 2.2" fill="none" stroke="#fff" stroke-width="1"/><path d="M9.2 3 A4.2 4.2 0 0 0 2.8 9.2" fill="none" stroke="#404040" stroke-width="1"/></svg>
<div class="t" style="left:536.00px;top:934.96px;font-size:11.5px;line-height:11.5px;font-weight:400;color:#000;font-family:'Liberation Sans', sans-serif;transform:scaleX(0.8531);transform-origin:0 0;">dB</div>
<svg style="left:518px;top:955px" width="12" height="12"><circle cx="6" cy="6" r="4.5" fill="#fff"/><path d="M10.2 2.2 A5.5 5.5 0 0 0 1.8 10.2" fill="none" stroke="#808080" stroke-width="1"/><path d="M1.8 10.2 A5.5 5.5 0 0 0 10.2 2.2" fill="none" stroke="#fff" stroke-width="1"/><path d="M9.2 3 A4.2 4.2 0 0 0 2.8 9.2" fill="none" stroke="#404040" stroke-width="1"/></svg>
<div class="t" style="left:536.00px;top:956.46px;font-size:11.5px;line-height:11.5px;font-weight:400;color:#000;font-family:'Liberation Sans', sans-serif;transform:scaleX(0.8692);transform-origin:0 0;">dBFS</div>
<div style="left:588px;top:929px;width:50px;height:23px;background:#f0f0f0;box-shadow:inset 1px 1px 0 #e3e3e3, inset 2px 2px 0 #fff, inset -1px -1px 0 #696969, inset -2px -2px 0 #a0a0a0;"></div>
<div class="t" style="left:598.50px;top:934.96px;font-size:11.5px;line-height:11.5px;font-weight:400;color:#8d8d8d;font-family:'Liberation Sans', sans-serif;transform:scaleX(0.9198);transform-origin:0 0;">Set&nbsp;Vr</div>
<div style="left:670px;top:893px;width:13px;height:13px;background:#f0f0f0;box-shadow:inset 1px 1px 0 #a0a0a0, inset 2px 2px 0 #a0a0a0, inset -1px -1px 0 #fff, inset -2px -2px 0 #e3e3e3;"></div>
<div class="t" style="left:688.00px;top:894.96px;font-size:11.5px;line-height:11.5px;font-weight:400;color:#8d8d8d;font-family:'Liberation Sans', sans-serif;transform:scaleX(0.9094);transform-origin:0 0;">Energy&nbsp;Per&nbsp;Hz</div>
<div class="t" style="left:598.00px;top:958.96px;font-size:11.5px;line-height:11.5px;font-weight:400;color:#000;font-family:'Liberation Sans', sans-serif;transform:scaleX(0.9098);transform-origin:0 0;">0dBFS&nbsp;=</div>
<svg style="left:652px;top:958px" width="12" height="12"><circle cx="6" cy="6" r="4.5" fill="#f0f0f0"/><path d="M10.2 2.2 A5.5 5.5 0 0 0 1.8 10.2" fill="none" stroke="#808080" stroke-width="1"/><path d="M1.8 10.2 A5.5 5.5 0 0 0 10.2 2.2" fill="none" stroke="#fff" stroke-width="1"/><path d="M9.2 3 A4.2 4.2 0 0 0 2.8 9.2" fill="none" stroke="#404040" stroke-width="1"/><circle cx="6" cy="6" r="1.8" fill="#a0a0a0"/></svg>
<div class="t" style="left:669.00px;top:959.46px;font-size:11.5px;line-height:11.5px;font-weight:400;color:#8d8d8d;font-family:'Liberation Sans', sans-serif;transform:scaleX(0.9443);transform-origin:0 0;">FS&nbsp;Sine&nbsp;Wave</div>
<svg style="left:766px;top:958px" width="12" height="12"><circle cx="6" cy="6" r="4.5" fill="#f0f0f0"/><path d="M10.2 2.2 A5.5 5.5 0 0 0 1.8 10.2" fill="none" stroke="#808080" stroke-width="1"/><path d="M1.8 10.2 A5.5 5.5 0 0 0 10.2 2.2" fill="none" stroke="#fff" stroke-width="1"/><path d="M9.2 3 A4.2 4.2 0 0 0 2.8 9.2" fill="none" stroke="#404040" stroke-width="1"/></svg>
<div class="t" style="left:783.50px;top:959.46px;font-size:11.5px;line-height:11.5px;font-weight:400;color:#8d8d8d;font-family:'Liberation Sans', sans-serif;transform:scaleX(0.9411);transform-origin:0 0;">FS&nbsp;Square&nbsp;Wave</div>
<div style="left:354px;top:985px;width:13px;height:13px;background:#fff;box-shadow:inset 1px 1px 0 #a0a0a0, inset 2px 2px 0 #696969, inset -1px -1px 0 #fff, inset -2px -2px 0 #e3e3e3;"></div>
<div class="t" style="left:372.00px;top:986.96px;font-size:11.5px;line-height:11.5px;font-weight:400;color:#000;font-family:'Liberation Sans', sans-serif;transform:scaleX(0.9280);transform-origin:0 0;">Convert&nbsp;to&nbsp;Impedance</div>
<div style="left:354px;top:1012px;width:593px;height:78px;border:1px solid #d5dfe5;box-shadow:inset 1px 1px 0 #fff;border-color:#a0a0a0 #fff #fff #a0a0a0;outline:1px solid transparent;"></div>
<div style="left:354px;top:1012px;width:593px;height:78px;border:1px solid #a7a7a7;"></div>
<div style="left:361px;top:1009px;width:57px;height:7px;background:#f0f0f0;"></div>
<div class="t" style="left:363.00px;top:1007.26px;font-size:11.5px;line-height:11.5px;font-weight:400;color:#8d8d8d;font-family:'Liberation Sans', sans-serif;transform:scaleX(0.9315);transform-origin:0 0;">Impedance</div>
<svg style="left:364px;top:1038px" width="12" height="12"><circle cx="6" cy="6" r="4.5" fill="#f0f0f0"/><path d="M10.2 2.2 A5.5 5.5 0 0 0 1.8 10.2" fill="none" stroke="#808080" stroke-width="1"/><path d="M1.8 10.2 A5.5 5.5 0 0 0 10.2 2.2" fill="none" stroke="#fff" stroke-width="1"/><path d="M9.2 3 A4.2 4.2 0 0 0 2.8 9.2" fill="none" stroke="#404040" stroke-width="1"/><circle cx="6" cy="6" r="1.8" fill="#a0a0a0"/></svg>
<svg style="left:456px;top:1038px" width="12" height="12"><circle cx="6" cy="6" r="4.5" fill="#f0f0f0"/><path d="M10.2 2.2 A5.5 5.5 0 0 0 1.8 10.2" fill="none" stroke="#808080" stroke-width="1"/><path d="M1.8 10.2 A5.5 5.5 0 0 0 10.2 2.2" fill="none" stroke="#fff" stroke-width="1"/><path d="M9.2 3 A4.2 4.2 0 0 0 2.8 9.2" fill="none" stroke="#404040" stroke-width="1"/></svg>
<svg style="left:390px;top:1026px" width="50" height="52"><rect x="0" y="0" width="50" height="52" fill="#f7f7f7"/><circle cx="5" cy="3" r="2" fill="#fff" stroke="#000" stroke-width="1"/><path d="M5 5V9 M5 22V30 M5 44V52 M5 8H30 M5 29H30" stroke="#000" stroke-width="1"/><circle cx="32" cy="8" r="2" fill="#fff" stroke="#000" stroke-width="1"/><circle cx="32" cy="29" r="2" fill="#fff" stroke="#000" stroke-width="1"/><rect x="2" y="10" width="6" height="12" fill="#fff" stroke="#000" stroke-width="1"/><rect x="2" y="32" width="6" height="12" fill="#fff" stroke="#000" stroke-width="1"/><text x="11" y="23" font-family="Liberation Sans" font-size="11" fill="#000">Zx</text><text x="11" y="45" font-family="Liberation Sans" font-size="11" fill="#000">Rr</text><text x="36" y="13" font-family="Liberation Sans" font-size="11" fill="#000">Vo</text><text x="38" y="36" font-family="Liberation Sans" font-size="11" fill="#000">Vi</text></svg>
<svg style="left:481px;top:1026px" width="50" height="52"><rect x="0" y="0" width="50" height="52" fill="#f7f7f7"/><circle cx="5" cy="3" r="2" fill="#fff" stroke="#000" stroke-width="1"/><path d="M5 5V9 M5 22V30 M5 44V52 M5 8H30 M5 29H30" stroke="#000" stroke-width="1"/><circle cx="32" cy="8" r="2" fill="#fff" stroke="#000" stroke-width="1"/><circle cx="32" cy="29" r="2" fill="#fff" stroke="#000" stroke-width="1"/><rect x="2" y="10" width="6" height="12" fill="#fff" stroke="#000" stroke-width="1"/><rect x="2" y="32" width="6" height="12" fill="#fff" stroke="#000" stroke-width="1"/><text x="11" y="23" font-family="Liberation Sans" font-size="11" fill="#000">Rr</text><text x="11" y="45" font-family="Liberation Sans" font-size="11" fill="#000">Zx</text><text x="36" y="13" font-family="Liberation Sans" font-size="11" fill="#000">Vo</text><text x="38" y="36" font-family="Liberation Sans" font-size="11" fill="#000">Vi</text></svg>
<div class="t" style="left:553.50px;top:1031.96px;font-size:11.5px;line-height:11.5px;font-weight:400;color:#8d8d8d;font-family:'Liberation Sans', sans-serif;transform:scaleX(0.9471);transform-origin:0 0;">Reference&nbsp;Vo</div>
<div style="left:634px;top:1026px;width:270px;height:21px;background:#f0f0f0;box-shadow:inset 1px 1px 0 #a0a0a0, inset 2px 2px 0 #696969, inset -1px -1px 0 #fff, inset -2px -2px 0 #e3e3e3;"></div>
<div style="left:913px;top:1025px;width:27px;height:23px;background:#f0f0f0;box-shadow:inset 1px 1px 0 #e3e3e3, inset 2px 2px 0 #fff, inset -1px -1px 0 #696969, inset -2px -2px 0 #a0a0a0;"></div>
<svg style="left:918px;top:1028px" width="17" height="16"><path d="M1 4H6L7 5H12V8H4L1 14Z" fill="#a8a870"/><path d="M1 14L4 8H16L13 14Z" fill="#d8d898" stroke="#8a8a50" stroke-width="0.6"/><path d="M9 4 C10 1 13 1 14 3 M12.5 3H14.5V1" fill="none" stroke="#404040" stroke-width="1"/></svg>
<div class="t" style="left:553.50px;top:1061.96px;font-size:11.5px;line-height:11.5px;font-weight:400;color:#8d8d8d;font-family:'Liberation Sans', sans-serif;transform:scaleX(1.0131);transform-origin:0 0;">Rr&nbsp;(Ω)</div>
<div style="left:634px;top:1057px;width:58px;height:23px;background:#f0f0f0;box-shadow:inset 1px 1px 0 #a0a0a0, inset 2px 2px 0 #696969, inset -1px -1px 0 #fff, inset -2px -2px 0 #e3e3e3;"></div>
<div class="t" style="left:637.00px;top:1061.26px;font-size:11.5px;line-height:11.5px;font-weight:400;color:#8d8d8d;font-family:'Liberation Sans', sans-serif;">10</div>
<div style="left:0px;top:1078px;width:1920px;height:2px;background:#3c3c3c;"></div>
<svg style="left:802px;top:774px" width="14" height="22"><path d="M1 1 V17 L5 13 L8 20 L10.5 19 L7.5 12 H13 Z" fill="#fff" stroke="#000" stroke-width="1" stroke-linejoin="miter"/></svg>
</body></html>
